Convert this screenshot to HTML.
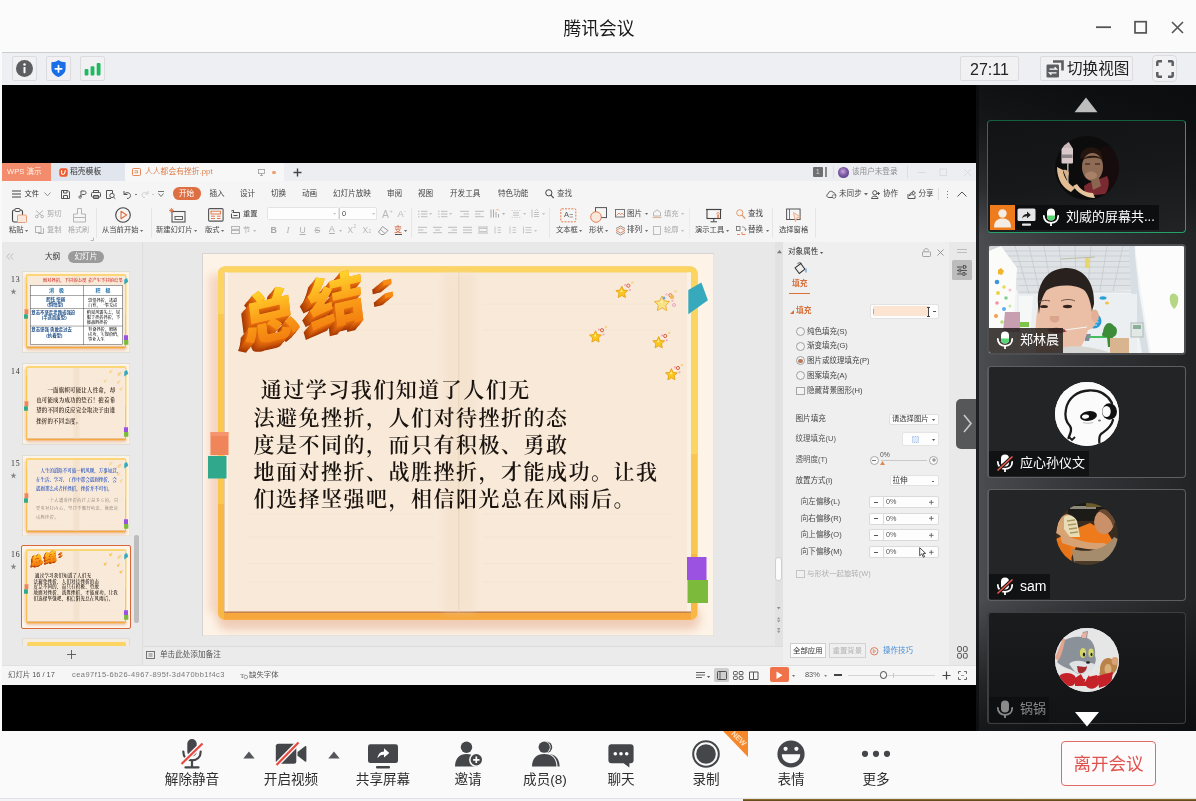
<!DOCTYPE html>
<html lang="zh-CN">
<head>
<meta charset="utf-8">
<title>腾讯会议</title>
<style>
*{box-sizing:border-box;margin:0;padding:0}
html,body{width:1196px;height:801px;overflow:hidden;background:#fafafa}
body{position:relative;font-family:"Liberation Sans","Noto Sans CJK SC",sans-serif;color:#222}
.abs{position:absolute}
#titlebar,#toolbar,#bottombar,#side{will-change:transform}
#titlebar{position:absolute;left:0;top:0;width:1196px;height:52px;background:#fbfbfb}
#title{position:absolute;left:1px;top:17px;width:1196px;text-align:center;font-size:17.7px;line-height:24px;color:#1a1a1a}
#toolbar{position:absolute;left:2px;top:52px;width:1194px;height:33px;background:#eeeff2;border-top:1px solid #cdcdd0}
.tbtn{position:absolute;top:3px;height:25px;border:1px solid #dcdce0;background:#f1f1f4;border-radius:2px}
#stage{position:absolute;left:2px;top:85px;width:974px;height:646px;background:#000}
#side{position:absolute;left:976px;top:85px;width:220px;height:646px;background:#1c1d1f}
#bottombar{position:absolute;left:0;top:731px;width:1196px;height:67px;background:#fafafa}
#strip{position:absolute;left:0;top:798px;width:1196px;height:3px;background:#f3f4f6;border-top:1px solid #dfe1e4}
#strip i{position:absolute;left:743px;top:-0.500px;width:453px;height:3.500px;background:linear-gradient(180deg,#a5822e 0%,#6b5220 35%,#54401a 100%)}
.bl{position:absolute;top:41px;font-size:13.6px;line-height:16px;color:#2e2e2e;white-space:nowrap;text-align:center}

#side{background:linear-gradient(90deg,#1e1f21 0px,#1f2022 2.6px,#4b4d51 3.2px,#47494d 12px,#333437 110px,#242527 212px,#222325 220px)}
#side:before{content:"";position:absolute;left:0;top:0;width:220px;height:150px;background:linear-gradient(180deg,rgba(8,9,10,.88) 0%,rgba(8,9,10,.8) 25%,rgba(8,9,10,.45) 70%,rgba(8,9,10,0) 100%);pointer-events:none}
#side:after{content:"";position:absolute;left:0;bottom:0;width:220px;height:130px;background:linear-gradient(0deg,rgba(8,9,10,.8) 0%,rgba(8,9,10,.6) 35%,rgba(8,9,10,0) 100%);pointer-events:none}
#side>*{z-index:1}
.tile{position:absolute;left:11px;width:199px;height:111px;border:1px solid #5e5f62;border-left:2px solid #5a5c60;border-radius:4px;background:linear-gradient(100deg,#1b1c1e 0%,#212224 45%,#2a2b2d 100%);overflow:hidden}
.nm{position:absolute;left:0px;bottom:1px;height:25px;background:#111213;color:#fff;font-size:13px;line-height:24px;white-space:nowrap;padding-left:31px}
.nm svg{position:absolute;left:7px;top:3px}
.av{position:absolute;left:66px;top:15px;width:64px;height:64px;border-radius:50%;overflow:hidden}
.av svg{filter:blur(.6px)}
#wpsclip{position:absolute;left:0;top:78px;width:974px;height:522px;overflow:hidden}
#wps{position:absolute;left:-2px;top:-163px;width:1196px;height:801px;filter:blur(.45px);font-family:"Liberation Sans","Noto Sans CJK SC",sans-serif}
#wps .a{position:absolute}
#wps .t{position:absolute;font-size:7.3px;line-height:10px;height:10px;white-space:nowrap;color:#3a3a3a}
#wps .g{color:#a9a9a9}
#wps .o{color:#d8703a}
#wps svg{overflow:visible}
#wps .ic{stroke:#555;stroke-width:1;fill:none}
#wps .ig{stroke:#b4b4b4;stroke-width:1;fill:none}

#wps .kai{font-family:"Liberation Serif","Noto Serif CJK SC",serif;font-weight:600}
</style>
</head>
<body>
<!-- ======= TITLE BAR ======= -->
<div id="titlebar">
  <div id="title">腾讯会议</div>
  <svg class="abs" style="left:1090px;top:15px" width="100" height="26" viewBox="0 0 100 26">
    <path d="M6 12.2H21" stroke="#555" stroke-width="1.8" fill="none"/>
    <rect x="45" y="6.7" width="11.2" height="11.2" stroke="#555" stroke-width="1.7" fill="none"/>
    <path d="M82 7L93 18M93 7L82 18" stroke="#555" stroke-width="1.6" fill="none"/>
  </svg>
</div>
<!-- ======= TOP TOOLBAR ======= -->
<div id="toolbar">
  <div class="tbtn" style="left:10px;width:25px"><svg class="abs" style="left:3px;top:3px" width="17" height="17" viewBox="0 0 17 17"><circle cx="8.5" cy="8.5" r="8.5" fill="#5d5e62"/><circle cx="8.5" cy="4.6" r="1.25" fill="#fff"/><rect x="7.5" y="7" width="2" height="6.2" rx=".6" fill="#fff"/></svg></div>
  <div class="tbtn" style="left:44px;width:25px"><svg class="abs" style="left:3px;top:2px" width="17" height="19" viewBox="0 0 17 19"><path d="M8.5 1C6.8 2.6 4.2 3.2 1.4 3.2V9.4C1.4 13.6 4.6 16.6 8.5 18C12.4 16.6 15.6 13.6 15.6 9.4V3.2C12.8 3.2 10.2 2.6 8.5 1Z" fill="#1a6fe8"/><path d="M8.5 6.6V13M5.3 9.8H11.7" stroke="#fff" stroke-width="1.7" stroke-linecap="round"/></svg></div>
  <div class="tbtn" style="left:78px;width:25px"><svg class="abs" style="left:2px;top:3px" width="19" height="17" viewBox="0 0 19 17"><rect x="1.6" y="9" width="3.8" height="6.6" rx="1" fill="#1dba5f"/><rect x="7.6" y="6.3" width="3.8" height="9.3" rx="1" fill="#1dba5f"/><rect x="13.7" y="3" width="3.8" height="12.6" rx="1" fill="#1dba5f"/></svg></div>
  <div class="tbtn" style="left:958px;width:59px;font-size:16px;line-height:25px;text-align:center;color:#222">27:11</div>
  <div class="tbtn" style="left:1038px;width:93px"><svg class="abs" style="left:5px;top:3px" width="18" height="18" viewBox="0 0 18 18"><path d="M7 1.500H16.500V10.500" stroke="#5d5e62" stroke-width="2.600" fill="none"/><rect x="0.500" y="4.500" width="12.500" height="13" rx="1.200" fill="#5d5e62"/><path d="M3.5 9.2H10.5L8.6 7.3M10.5 12.8H3.5L5.4 14.7" stroke="#fff" stroke-width="1.3" fill="none"/></svg><span class="abs" style="left:26px;top:1px;font-size:15.6px;line-height:22px;color:#222;white-space:nowrap">切换视图</span></div>
  <div class="tbtn" style="left:1150px;top:2px;width:25px;height:27px;border-radius:4px"><svg class="abs" style="left:3px;top:4px" width="18" height="18" viewBox="0 0 18 18"><path d="M1.300 6V2.300A1 1 0 0 1 2.300 1.300H6M12 1.300H15.700A1 1 0 0 1 16.700 2.300V6M16.700 12V15.700A1 1 0 0 1 15.700 16.700H12M6 16.700H2.300A1 1 0 0 1 1.300 15.700V12" stroke="#5d5e62" stroke-width="2.500" fill="none"/></svg></div>
</div>
<!-- ======= STAGE ======= -->
<div id="stage"><div id="wpsclip"><div id="wps">
<div class="a" style="left:2px;top:163px;width:974px;height:522px;background:#f5f5f5"></div>
<div class="a" style="left:2px;top:163px;width:974px;height:18px;background:#eceef2"></div>
<div class="a" style="left:2px;top:163px;width:49px;height:18px;background:#f28c6c"></div>
<div class="t" style="left:7px;top:167.3px;color:#fff3ea;font-size:7.6px">WPS 演示</div>
<div class="a" style="left:51px;top:163px;width:74px;height:18px;background:#e0e5ee"></div>
<svg class="a" style="left:59px;top:167.5px;" width="9" height="9" viewBox="0 0 9 9"><rect x="0.3" y="0.3" width="8.4" height="8.4" rx="2.2" fill="#ef5b2c"/><path d="M2.6 2.2V5.2C2.600 6.800 5.500 6.800 5.800 4.600L6.400 2.200" stroke="#fff" stroke-width="1.100" fill="none"/></svg>
<div class="t" style="left:70px;top:167.3px;color:#333;font-size:7.8px">稻壳模板</div>
<div class="a" style="left:125px;top:163px;width:158.5px;height:18px;background:#f7f7f7"></div>
<svg class="a" style="left:132px;top:168px;" width="9" height="8" viewBox="0 0 9 8"><rect x="0.5" y="0.5" width="8" height="7" rx="0.800" stroke="#e58a5c" fill="none" stroke-width="1"/><path d="M2.500 2.800H5.500V4.800H2.500" stroke="#e58a5c" fill="none" stroke-width="0.900"/></svg>
<div class="t" style="left:145px;top:167.3px;color:#e0824f;font-size:7.8px">人人都会有挫折.ppt</div>
<svg class="a" style="left:258px;top:168.5px;" width="7" height="7" viewBox="0 0 7 7"><rect x="0.500" y="0.500" width="6" height="4" stroke="#999" fill="none" stroke-width="0.800"/><path d="M3.500 4.500V6.500M2 6.500H5" stroke="#999" stroke-width="0.800"/></svg>
<div class="a" style="left:272.3px;top:170.5px;width:3.4px;height:3.4px;background:#f0a065;border-radius:50%"></div>
<svg class="a" style="left:293px;top:168px;" width="9" height="9" viewBox="0 0 9 9"><path d="M4.500 0.500V8.500M0.500 4.500H8.500" stroke="#444" stroke-width="1.400"/></svg>
<div class="a" style="left:813px;top:167px;width:10px;height:10px;background:#6f6f72;border-radius:1px"></div>
<div class="t" style="left:816px;top:167px;color:#ddd;font-size:6.5px">1</div>
<div class="a" style="left:825px;top:167px;width:1.6px;height:10px;background:#8a8a8d"></div>
<div class="a" style="left:833px;top:166px;width:1px;height:12px;background:#dcdde0"></div>
<div class="a" style="left:838px;top:167px;width:10.5px;height:10.5px;background:radial-gradient(circle at 45% 40%,#c9a6d8 0%,#7d5aa6 45%,#4a3572 100%);border-radius:50%"></div>
<div class="t" style="left:852px;top:167.3px;color:#8d8d90;font-size:7.6px">该用户未登录</div>
<div class="a" style="left:907px;top:166px;width:1px;height:12px;background:#dcdde0"></div>
<svg class="a" style="left:918px;top:168px;" width="55" height="9" viewBox="0 0 55 9"><path d="M0 4.500H8" stroke="#dadbde" stroke-width="1"/><rect x="22" y="1" width="6.500" height="6.500" stroke="#dadbde" fill="none"/><path d="M46 1L53 8M53 1L46 8" stroke="#dadbde" stroke-width="1"/></svg>
<svg class="a" style="left:12px;top:190px;" width="9" height="8" viewBox="0 0 9 8"><path d="M0 1H9M0 4H9M0 7H9" stroke="#444" stroke-width="1"/></svg>
<div class="t" style="left:24.5px;top:188.6px;color:#333">文件</div>
<svg class="a" style="left:44px;top:191.5px;" width="7" height="5" viewBox="0 0 7 5"><path d="M0.500 0.500L3.500 3.800L6.500 0.500" stroke="#888" fill="none" stroke-width="0.900"/></svg>
<svg class="a" style="left:61px;top:189.5px;" width="9" height="9" viewBox="0 0 9 9"><path d="M0.500 0.500H7L8.500 2V8.500H0.500Z" class="ic"/><path d="M2.500 0.500V3H6V0.500M2.500 8.500V5.500H6.500V8.500" class="ic" stroke-width="0.800"/></svg>
<svg class="a" style="left:78px;top:189.5px;" width="9" height="9" viewBox="0 0 9 9"><path d="M2.500 8.500C1 8.500 0.500 7 1.500 6C2.500 5 3.500 6 3 7.500M3 7.500V1H6.500C8.500 1 8.500 4.500 6.500 4.500H4" class="ic"/></svg>
<svg class="a" style="left:91px;top:189.5px;" width="10" height="9" viewBox="0 0 10 9"><rect x="0.500" y="2.500" width="9" height="4.500" rx="1" class="ic"/><path d="M2.500 2.500V0.500H7.500V2.500M2.500 5.500H7.500V8.500H2.500Z" class="ic" stroke-width="0.900"/></svg>
<svg class="a" style="left:106px;top:189.5px;" width="10" height="9" viewBox="0 0 10 9"><path d="M5 8.500H0.500V0.500H6.500V3" class="ic"/><circle cx="6" cy="5.500" r="2.200" class="ic"/><path d="M7.600 7.200L9.300 8.800" class="ic"/></svg>
<svg class="a" style="left:122px;top:189.5px;" width="10" height="9" viewBox="0 0 10 9"><path d="M2 1V4.500H5.500" class="ic" stroke-width="1.100"/><path d="M2 4.500C4 1.500 8.500 2.500 8.500 5.500C8.500 7.500 7 8.500 5 8.500" class="ic" stroke-width="1.100"/></svg>
<div class="a" style="left:134.5px;top:193.5px;width:2.5px;height:1px;background:#777"></div>
<svg class="a" style="left:141px;top:190px;" width="9" height="8" viewBox="0 0 9 8"><path d="M7 1V4H4" stroke="#d2d2d2" fill="none"/><path d="M7 4C5.500 1.500 1 2 1 5C1 6.800 2.500 7.500 4 7.500" stroke="#d2d2d2" fill="none"/></svg>
<div class="a" style="left:151.5px;top:193.5px;width:2px;height:1px;background:#ccc"></div>
<svg class="a" style="left:158px;top:190.5px;" width="6" height="6" viewBox="0 0 6 6"><path d="M0 0.500H6" stroke="#666" stroke-width="0.900"/><path d="M0.500 2.500L3 5.500L5.500 2.500" stroke="#666" fill="none" stroke-width="0.900"/></svg>
<div class="a" style="left:173px;top:187.3px;width:27.5px;height:12.6px;background:#dd6f42;border-radius:6.300px"></div>
<div class="t" style="left:179px;top:188.6px;color:#fff;font-size:7.6px">开始</div>
<div class="t" style="left:209.5px;top:188.6px;color:#444;font-size:7.6px">插入</div>
<div class="t" style="left:240px;top:188.6px;color:#444;font-size:7.6px">设计</div>
<div class="t" style="left:271px;top:188.6px;color:#444;font-size:7.6px">切换</div>
<div class="t" style="left:302px;top:188.6px;color:#444;font-size:7.6px">动画</div>
<div class="t" style="left:333px;top:188.6px;color:#444;font-size:7.6px">幻灯片放映</div>
<div class="t" style="left:387px;top:188.6px;color:#444;font-size:7.6px">审阅</div>
<div class="t" style="left:418px;top:188.6px;color:#444;font-size:7.6px">视图</div>
<div class="t" style="left:450px;top:188.6px;color:#444;font-size:7.6px">开发工具</div>
<div class="t" style="left:498px;top:188.6px;color:#444;font-size:7.6px">特色功能</div>
<svg class="a" style="left:545px;top:189px;" width="9" height="10" viewBox="0 0 9 10"><circle cx="3.800" cy="3.800" r="3.100" stroke="#444" fill="none" stroke-width="1"/><path d="M6 6.200L8.700 9.200" stroke="#444" stroke-width="1.100"/></svg>
<div class="t" style="left:557px;top:188.6px;color:#555;font-size:7.6px">查找</div>
<svg class="a" style="left:826px;top:189.5px;" width="11" height="8" viewBox="0 0 11 8"><path d="M3 7.500C0.500 7.500 0 4.500 2.200 3.800C2.500 1 6.500 0.200 7.600 3C10 2.800 10.800 7.500 8 7.500Z" class="ic" stroke-width="0.900"/><circle cx="8" cy="6.500" r="1.800" fill="#f5f5f5" stroke="#555" stroke-width="0.700"/></svg>
<div class="t" style="left:839px;top:188.6px;color:#444;font-size:7.6px">未同步</div>
<svg class="a" style="left:863.5px;top:193px;" width="4" height="3" viewBox="0 0 4 3"><path d="M0 0H4L2 2.500Z" fill="#666"/></svg>
<svg class="a" style="left:870.5px;top:189.5px;" width="9" height="9" viewBox="0 0 9 9"><circle cx="3.800" cy="2.800" r="2.100" class="ic" stroke-width="0.900"/><path d="M0.500 8.500C0.500 5.500 7 5.500 7 8.500Z" class="ic" stroke-width="0.900"/><path d="M7.500 2V5M6 3.500H9" class="ic" stroke-width="0.800"/></svg>
<div class="t" style="left:883px;top:188.6px;color:#444;font-size:7.600px">协作</div>
<svg class="a" style="left:906px;top:189.5px;" width="10" height="9" viewBox="0 0 10 9"><path d="M2 4V8.500H9V5.500" class="ic" stroke-width="0.900"/><path d="M3.500 6C3.500 3.500 5 2.200 7 2.200V0.800L9.500 3L7 5.200V3.800C5.500 3.800 4.500 4.500 3.500 6Z" class="ic" stroke-width="0.800"/></svg>
<div class="t" style="left:918.5px;top:188.6px;color:#444;font-size:7.600px">分享</div>
<div class="a" style="left:938px;top:187.5px;width:1px;height:12px;background:#dedede"></div>
<div class="a" style="left:946.6px;top:190.5px;width:1.4px;height:1.4px;background:#555;border-radius:50%"></div>
<div class="a" style="left:946.6px;top:193.5px;width:1.4px;height:1.4px;background:#555;border-radius:50%"></div>
<div class="a" style="left:946.6px;top:196.5px;width:1.4px;height:1.4px;background:#555;border-radius:50%"></div>
<svg class="a" style="left:957px;top:191px;" width="10" height="6" viewBox="0 0 10 6"><path d="M0.500 5.500L5 1L9.500 5.500" stroke="#555" fill="none" stroke-width="1"/></svg>
<div class="a" style="left:2px;top:205px;width:974px;height:37px;background:#f5f5f5"></div>
<div class="a" style="left:2px;top:241.5px;width:974px;height:1px;background:#dcdcdc"></div>
<svg class="a" style="left:12px;top:207.5px;" width="15" height="15" viewBox="0 0 15 15"><rect x="0.500" y="2" width="10" height="12" rx="1.800" stroke="#444" fill="none" stroke-width="1.100"/><rect x="3" y="0.500" width="5" height="3" rx="0.800" fill="#f5f5f5" stroke="#444" stroke-width="0.900"/><rect x="5.500" y="7" width="9" height="7.500" rx="1" fill="#fbe6da" stroke="#e59a75" stroke-width="0.900"/></svg>
<div class="t" style="left:9px;top:225px;color:#444">粘贴</div>
<svg class="a" style="left:24.5px;top:229.7px;" width="3.2" height="2.2" viewBox="0 0 3.2 2.2"><path d="M0 0H3.200L1.600 2Z" fill="#707070"/></svg>
<svg class="a" style="left:35px;top:209.5px;" width="9" height="8" viewBox="0 0 9 8"><path d="M1 0.500L7 6M8 0.500L2 6" class="ig"/><circle cx="1.800" cy="6.500" r="1.300" class="ig"/><circle cx="7.200" cy="6.500" r="1.300" class="ig"/></svg>
<div class="t g" style="left:47px;top:208.5px;">剪切</div>
<svg class="a" style="left:35px;top:226px;" width="9" height="8" viewBox="0 0 9 8"><rect x="0.500" y="0.500" width="5.500" height="6" class="ig"/><path d="M3 7.500H8.500V2" class="ig"/></svg>
<div class="t g" style="left:47px;top:225px;">复制</div>
<svg class="a" style="left:72px;top:207.5px;" width="15" height="15" viewBox="0 0 15 15"><path d="M5.500 0.500H9.500V6H13.500V9.500H1.500V6H5.500Z" class="ig" stroke-width="1.100"/><path d="M1.500 9.500V14H13.500V9.500" class="ig" stroke-width="1.100"/></svg>
<div class="t g" style="left:68px;top:225px;font-size:7px;">格式刷</div>
<svg class="a" style="left:90px;top:237px;" width="4" height="4" viewBox="0 0 4 4"><path d="M3.500 0.500V3.500H0.500" stroke="#aaa" fill="none" stroke-width="0.800"/></svg>
<div class="a" style="left:95.5px;top:208px;width:1px;height:30px;background:#e6e6e6"></div>
<svg class="a" style="left:114.5px;top:207px;" width="16" height="16" viewBox="0 0 16 16"><circle cx="8" cy="8" r="7.300" stroke="#444" fill="none" stroke-width="1.100"/><path d="M6 4.200L11.600 8L6 11.800Z" stroke="#e0703f" fill="none" stroke-width="1.100" stroke-linejoin="round"/></svg>
<div class="t" style="left:102px;top:225px;color:#444">从当前开始</div>
<svg class="a" style="left:140px;top:229.7px;" width="3.2" height="2.2" viewBox="0 0 3.2 2.2"><path d="M0 0H3.200L1.600 2Z" fill="#707070"/></svg>
<div class="a" style="left:150.5px;top:208px;width:1px;height:30px;background:#e6e6e6"></div>
<svg class="a" style="left:169px;top:207.5px;" width="17" height="15" viewBox="0 0 17 15"><rect x="3" y="3.500" width="13" height="10.500" stroke="#555" fill="none" stroke-width="1.100"/><rect x="6" y="8.500" width="7.500" height="3" stroke="#555" fill="none" stroke-width="0.900"/><path d="M2.500 0V5M0 2.500H5M0.700 0.700L4.300 4.300M4.300 0.700L0.700 4.300" stroke="#e0703f" stroke-width="0.800"/></svg>
<div class="t" style="left:156px;top:225px;color:#444">新建幻灯片</div>
<svg class="a" style="left:194px;top:229.7px;" width="3.2" height="2.2" viewBox="0 0 3.2 2.2"><path d="M0 0H3.200L1.600 2Z" fill="#707070"/></svg>
<svg class="a" style="left:208px;top:208px;" width="16" height="14" viewBox="0 0 16 14"><rect x="0.600" y="0.600" width="14.500" height="12.500" rx="1" stroke="#555" fill="none" stroke-width="1.100"/><rect x="3" y="3.200" width="9.500" height="2.800" stroke="#e0703f" fill="none" stroke-width="0.900"/><path d="M3 8.200H7M3 10.500H7M9 8.200H12.500M9 10.500H12.500" stroke="#e0703f" stroke-width="0.900"/></svg>
<div class="t" style="left:205px;top:225px;color:#444">版式</div>
<svg class="a" style="left:220.5px;top:229.7px;" width="3.2" height="2.2" viewBox="0 0 3.2 2.2"><path d="M0 0H3.200L1.600 2Z" fill="#707070"/></svg>
<svg class="a" style="left:231px;top:209.5px;" width="9" height="8.5" viewBox="0 0 9 8.5"><path d="M1.500 2.500H8.500V8H0.500V3.500" class="ic" stroke-width="0.900"/><path d="M0.300 1L2.500 0.300V2.500" class="ic" stroke-width="0.800"/><path d="M2.500 5.500H6.500" class="ic" stroke-width="0.800"/></svg>
<div class="t" style="left:243px;top:208.5px;color:#444">重置</div>
<svg class="a" style="left:231px;top:226px;" width="9" height="8" viewBox="0 0 9 8"><rect x="0.500" y="0.500" width="8" height="2.800" class="ig"/><rect x="0.500" y="4.500" width="8" height="3" class="ig"/></svg>
<div class="t g" style="left:243px;top:225px;">节</div>
<svg class="a" style="left:252.5px;top:229.7px;" width="3.2" height="2.2" viewBox="0 0 3.2 2.2"><path d="M0 0H3.200L1.600 2Z" fill="#b8b8b8"/></svg>
<div class="a" style="left:266.5px;top:207px;width:72.5px;height:13px;background:#fdfdfd;border:1px solid #e4e4e4;border-radius:1.500px"></div>
<svg class="a" style="left:333px;top:213.39999999999998px;" width="3.2" height="2.2" viewBox="0 0 3.2 2.2"><path d="M0 0H3.200L1.600 2Z" fill="#c8c8c8"/></svg>
<div class="a" style="left:339px;top:207px;width:38px;height:13px;background:#fdfdfd;border:1px solid #e4e4e4;border-left-color:#cfcfcf;border-radius:1.500px"></div>
<div class="t" style="left:342px;top:208.5px;color:#444">0</div>
<svg class="a" style="left:371.5px;top:213.39999999999998px;" width="3.2" height="2.2" viewBox="0 0 3.2 2.2"><path d="M0 0H3.200L1.600 2Z" fill="#c8c8c8"/></svg>
<div class="t" style="left:382px;top:208.5px;color:#b9b9b9;font-size:10.500px">A</div>
<div class="t" style="left:389.5px;top:205.5px;color:#b9b9b9;font-size:5.500px">+</div>
<div class="t" style="left:397.5px;top:209.0px;color:#b9b9b9;font-size:9.500px">A</div>
<div class="t" style="left:404px;top:205.5px;color:#b9b9b9;font-size:5.500px">-</div>
<div class="t" style="left:270.5px;top:224.5px;color:#a6a6a6;font-size:8.800px;font-weight:700">B</div>
<div class="t" style="left:286.5px;top:224.5px;color:#b0b0b0;font-size:8.800px;font-style:italic;font-family:Liberation Serif,serif">I</div>
<div class="t" style="left:299.5px;top:224.5px;color:#b0b0b0;font-size:8.600px;text-decoration:underline">U</div>
<div class="t" style="left:314.5px;top:224.5px;color:#b0b0b0;font-size:8.600px;text-decoration:line-through">S</div>
<div class="t" style="left:329px;top:224.2px;color:#b0b0b0;font-size:8.600px;text-decoration:underline">A</div>
<svg class="a" style="left:338.5px;top:229.7px;" width="3.2" height="2.2" viewBox="0 0 3.2 2.2"><path d="M0 0H3.200L1.600 2Z" fill="#bdbdbd"/></svg>
<div class="t" style="left:347.5px;top:224.7px;color:#b8b8b8;font-size:8.400px">X</div>
<div class="t" style="left:353.5px;top:221.5px;color:#b8b8b8;font-size:4.500px">2</div>
<div class="t" style="left:362.5px;top:224.7px;color:#b8b8b8;font-size:8.400px">X</div>
<div class="t" style="left:368.5px;top:227px;color:#b8b8b8;font-size:4.500px">2</div>
<svg class="a" style="left:378px;top:225.5px;" width="11" height="9" viewBox="0 0 11 9"><path d="M4.500 0.500L10 4.500L6 8.500H3L0.500 6Z" stroke="#8f8f8f" fill="none" stroke-width="0.900"/><path d="M2.500 3.500L7 7.500" stroke="#8f8f8f" stroke-width="0.800"/></svg>
<div class="t" style="left:394px;top:225px;color:#d0603a;font-size:8px">变</div>
<div class="a" style="left:394.5px;top:234.3px;width:7px;height:1px;background:#555"></div>
<svg class="a" style="left:404px;top:229.7px;" width="3.2" height="2.2" viewBox="0 0 3.2 2.2"><path d="M0 0H3.200L1.600 2Z" fill="#707070"/></svg>
<div class="a" style="left:410.5px;top:208px;width:1px;height:30px;background:#e6e6e6"></div>
<svg class="a" style="left:418px;top:209.5px;" width="10" height="8" viewBox="0 0 10 8"><rect x="0.300" y="0.8" width="1.100" height="1.100" fill="#adadad"/><path d="M3 1.3H9.500" stroke="#adadad" stroke-width="0.800"/><rect x="0.300" y="3.5" width="1.100" height="1.100" fill="#adadad"/><path d="M3 4H9.500" stroke="#adadad" stroke-width="0.800"/><rect x="0.300" y="6.2" width="1.100" height="1.100" fill="#adadad"/><path d="M3 6.7H9.500" stroke="#adadad" stroke-width="0.800"/></svg>
<svg class="a" style="left:429px;top:213.2px;" width="3.2" height="2.2" viewBox="0 0 3.2 2.2"><path d="M0 0H3.200L1.600 2Z" fill="#c4c4c4"/></svg>
<svg class="a" style="left:438px;top:209.5px;" width="10" height="8" viewBox="0 0 10 8"><rect x="0.300" y="0.8" width="1.100" height="1.100" fill="#adadad"/><path d="M3 1.3H9.500" stroke="#adadad" stroke-width="0.800"/><rect x="0.300" y="3.5" width="1.100" height="1.100" fill="#adadad"/><path d="M3 4H9.500" stroke="#adadad" stroke-width="0.800"/><rect x="0.300" y="6.2" width="1.100" height="1.100" fill="#adadad"/><path d="M3 6.7H9.500" stroke="#adadad" stroke-width="0.800"/></svg>
<svg class="a" style="left:449px;top:213.2px;" width="3.2" height="2.2" viewBox="0 0 3.2 2.2"><path d="M0 0H3.200L1.600 2Z" fill="#c4c4c4"/></svg>
<svg class="a" style="left:460px;top:209.5px;" width="9" height="8" viewBox="0 0 9 8"><path d="M0.0 1.2999999999999998H9.0" stroke="#adadad" stroke-width="0.800"/><path d="M3.6 4H9.0" stroke="#adadad" stroke-width="0.800"/><path d="M0.0 6.7H9.0" stroke="#adadad" stroke-width="0.800"/></svg>
<svg class="a" style="left:474.5px;top:209.5px;" width="9" height="8" viewBox="0 0 9 8"><path d="M0.0 1.2999999999999998H9.0" stroke="#adadad" stroke-width="0.800"/><path d="M0.0 4H5.4" stroke="#adadad" stroke-width="0.800"/><path d="M0.0 6.7H9.0" stroke="#adadad" stroke-width="0.800"/></svg>
<svg class="a" style="left:490px;top:209px;" width="10" height="9" viewBox="0 0 10 9"><path d="M1 0.500V8.500M3.500 0.500V8.500M6 3V8.500M8.500 5V8.500" stroke="#a0a0a0" stroke-width="0.900"/><path d="M6 1.500L7.500 0L9 1.500" stroke="#e9a07a" fill="none" stroke-width="0.800"/></svg>
<svg class="a" style="left:501.5px;top:213.2px;" width="3.2" height="2.2" viewBox="0 0 3.2 2.2"><path d="M0 0H3.200L1.600 2Z" fill="#b0b0b0"/></svg>
<svg class="a" style="left:511px;top:209.5px;" width="10" height="8" viewBox="0 0 10 8"><path d="M0.500 0.500H9.500M0.500 7.500H9.500" stroke="#c8c8c8" stroke-width="0.700" stroke-dasharray="1.500 1"/><path d="M2 2.800H8M2 5.200H8" stroke="#b4b4b4" stroke-width="0.800"/></svg>
<svg class="a" style="left:522.5px;top:213.2px;" width="3.2" height="2.2" viewBox="0 0 3.2 2.2"><path d="M0 0H3.200L1.600 2Z" fill="#c4c4c4"/></svg>
<svg class="a" style="left:531px;top:209px;" width="9" height="9" viewBox="0 0 9 9"><path d="M1 0.500V8.500" stroke="#b4b4b4" stroke-width="0.800"/><path d="M3 3.500H8M3 5.500H8M3 7.500H8" stroke="#b4b4b4" stroke-width="0.800"/><path d="M4 2L5.500 0.500L7 2" stroke="#b4b4b4" fill="none" stroke-width="0.700"/></svg>
<svg class="a" style="left:542px;top:213.2px;" width="3.2" height="2.2" viewBox="0 0 3.2 2.2"><path d="M0 0H3.200L1.600 2Z" fill="#c4c4c4"/></svg>
<svg class="a" style="left:418px;top:226px;" width="9" height="8" viewBox="0 0 9 8"><path d="M0.0 1.2999999999999998H9.0" stroke="#adadad" stroke-width="0.800"/><path d="M0.0 4H5.4" stroke="#adadad" stroke-width="0.800"/><path d="M0.0 6.7H9.0" stroke="#adadad" stroke-width="0.800"/></svg>
<svg class="a" style="left:433px;top:226px;" width="9" height="8" viewBox="0 0 9 8"><path d="M0.0 1.2999999999999998H9.0" stroke="#adadad" stroke-width="0.800"/><path d="M2.2 4H6.8" stroke="#adadad" stroke-width="0.800"/><path d="M0.0 6.7H9.0" stroke="#adadad" stroke-width="0.800"/></svg>
<svg class="a" style="left:448px;top:226px;" width="9" height="8" viewBox="0 0 9 8"><path d="M0.0 1.2999999999999998H9.0" stroke="#adadad" stroke-width="0.800"/><path d="M3.6 4H9.0" stroke="#adadad" stroke-width="0.800"/><path d="M0.0 6.7H9.0" stroke="#adadad" stroke-width="0.800"/></svg>
<svg class="a" style="left:463px;top:226px;" width="9" height="8" viewBox="0 0 9 8"><path d="M0.0 1.2999999999999998H9.0" stroke="#adadad" stroke-width="0.800"/><path d="M0.0 4H9.0" stroke="#adadad" stroke-width="0.800"/><path d="M0.0 6.7H9.0" stroke="#adadad" stroke-width="0.800"/></svg>
<svg class="a" style="left:478px;top:226px;" width="10" height="8" viewBox="0 0 10 8"><path d="M0 1H10M0 7H10" stroke="#b4b4b4" stroke-width="0.900"/><rect x="1" y="2.500" width="8" height="3" stroke="#b4b4b4" fill="none" stroke-width="0.700"/></svg>
<svg class="a" style="left:494px;top:226px;" width="7" height="8" viewBox="0 0 7 8"><path d="M1 0.500V7.500M3.500 1.500H7M3.500 4H7M3.500 6.500H7" stroke="#bbb" stroke-width="0.800"/></svg>
<svg class="a" style="left:509px;top:226px;" width="7" height="8" viewBox="0 0 7 8"><path d="M1 0.500V7.500M3.500 1.500H7M3.500 4H7M3.500 6.500H7" stroke="#bbb" stroke-width="0.800"/></svg>
<svg class="a" style="left:523px;top:226px;" width="9" height="8" viewBox="0 0 9 8"><path d="M0.500 0.500V7.500M2.500 1.500H8.500M2.500 4H8.500M2.500 6.500H8.500" stroke="#bbb" stroke-width="0.800"/></svg>
<svg class="a" style="left:534px;top:229.7px;" width="3.2" height="2.2" viewBox="0 0 3.2 2.2"><path d="M0 0H3.200L1.600 2Z" fill="#c8c8c8"/></svg>
<div class="a" style="left:548.5px;top:208px;width:1px;height:30px;background:#e6e6e6"></div>
<svg class="a" style="left:560px;top:207.5px;" width="17" height="15" viewBox="0 0 17 15"><rect x="0.800" y="0.800" width="15" height="13" rx="1" stroke="#e0703f" fill="none" stroke-width="0.900" stroke-dasharray="2 1.200"/><text x="4" y="9" font-size="7.500" fill="#555" font-family="Liberation Sans,sans-serif">A</text><path d="M9.500 6.500H13M9.500 9H13" stroke="#777" stroke-width="0.700"/></svg>
<div class="t" style="left:556px;top:225px;color:#444">文本框</div>
<svg class="a" style="left:579px;top:229.7px;" width="3.2" height="2.2" viewBox="0 0 3.2 2.2"><path d="M0 0H3.200L1.600 2Z" fill="#707070"/></svg>
<svg class="a" style="left:590px;top:207px;" width="18" height="16" viewBox="0 0 18 16"><rect x="5.500" y="0.600" width="11" height="10" stroke="#555" fill="#f5f5f5" stroke-width="1"/><circle cx="6" cy="10" r="5.300" stroke="#e0703f" fill="#fbe8dd" stroke-width="0.900"/></svg>
<div class="t" style="left:589px;top:225px;color:#444">形状</div>
<svg class="a" style="left:605px;top:229.7px;" width="3.2" height="2.2" viewBox="0 0 3.2 2.2"><path d="M0 0H3.200L1.600 2Z" fill="#707070"/></svg>
<svg class="a" style="left:615px;top:209px;" width="10" height="9" viewBox="0 0 10 9"><rect x="0.500" y="0.500" width="9" height="7.500" stroke="#666" fill="none" stroke-width="0.900"/><path d="M1.500 6.500L4 4L5.500 5.500L7 4.200L8.800 6" stroke="#e0703f" fill="none" stroke-width="0.800"/></svg>
<div class="t" style="left:627px;top:208.5px;color:#444;font-size:7.600px">图片</div>
<svg class="a" style="left:644.5px;top:213.2px;" width="3.2" height="2.2" viewBox="0 0 3.2 2.2"><path d="M0 0H3.200L1.600 2Z" fill="#707070"/></svg>
<svg class="a" style="left:614.5px;top:225.5px;" width="11" height="9" viewBox="0 0 11 9"><path d="M1 4.500L5.500 2L10 4.500L5.500 7Z" stroke="#e0703f" fill="none" stroke-width="0.800"/><path d="M1 6.500L5.500 9L10 6.500M1 2.500L5.500 0L10 2.500" stroke="#777" fill="none" stroke-width="0.800"/></svg>
<div class="t" style="left:627px;top:225px;color:#444;font-size:7.600px">排列</div>
<svg class="a" style="left:644.5px;top:229.7px;" width="3.2" height="2.2" viewBox="0 0 3.2 2.2"><path d="M0 0H3.200L1.600 2Z" fill="#707070"/></svg>
<svg class="a" style="left:652px;top:209px;" width="10" height="9" viewBox="0 0 10 9"><path d="M1.500 3.500L5 0.800L8.500 3.500V7H1.500Z" stroke="#b0b0b0" fill="none" stroke-width="0.900"/><path d="M0.500 8.500H9.500" stroke="#e5b49a" stroke-width="1.200"/></svg>
<div class="t g" style="left:664px;top:208.5px;">填充</div>
<svg class="a" style="left:681px;top:213.2px;" width="3.2" height="2.2" viewBox="0 0 3.2 2.2"><path d="M0 0H3.200L1.600 2Z" fill="#c0c0c0"/></svg>
<svg class="a" style="left:652.5px;top:225.5px;" width="9" height="9" viewBox="0 0 9 9"><rect x="0.500" y="0.500" width="7" height="8" stroke="#b8b8b8" fill="none" stroke-width="0.900"/></svg>
<div class="t g" style="left:664px;top:225px;">轮廓</div>
<svg class="a" style="left:681px;top:229.7px;" width="3.2" height="2.2" viewBox="0 0 3.2 2.2"><path d="M0 0H3.200L1.600 2Z" fill="#c0c0c0"/></svg>
<div class="a" style="left:688.5px;top:208px;width:1px;height:30px;background:#ececec"></div>
<svg class="a" style="left:705.5px;top:207.5px;" width="16" height="15" viewBox="0 0 16 15"><rect x="1" y="1.500" width="13.500" height="9" stroke="#444" fill="none" stroke-width="1.100"/><path d="M0 1.500H15.500" stroke="#444" stroke-width="1.100"/><path d="M7.800 10.500V13.500M4.500 13.800H11" stroke="#444" stroke-width="1"/><path d="M12 4.500C13.500 4.500 13.500 6.500 12.500 6.800V10H11.500V6.800C10.500 6.500 10.500 4.500 12 4.500Z" fill="#f5f5f5" stroke="#e0703f" stroke-width="0.700"/></svg>
<div class="t" style="left:695px;top:225px;color:#444">演示工具</div>
<svg class="a" style="left:725.5px;top:229.7px;" width="3.2" height="2.2" viewBox="0 0 3.2 2.2"><path d="M0 0H3.200L1.600 2Z" fill="#707070"/></svg>
<svg class="a" style="left:736px;top:208.5px;" width="10" height="10" viewBox="0 0 10 10"><circle cx="3.800" cy="3.800" r="3.100" stroke="#e0905f" fill="none" stroke-width="0.900"/><path d="M6 6.200L9.200 9.500" stroke="#e0905f" stroke-width="1.100"/></svg>
<div class="t" style="left:748px;top:208.5px;color:#444;font-size:7.600px">查找</div>
<svg class="a" style="left:735.5px;top:225.5px;" width="11" height="9" viewBox="0 0 11 9"><rect x="0.500" y="0.500" width="3.500" height="4" stroke="#666" fill="none" stroke-width="0.800"/><path d="M6 1C8.500 0.500 9.800 2 9.500 4.500L8.500 3.500M9.500 4.500L10.500 3.500" stroke="#666" fill="none" stroke-width="0.700"/><path d="M1 8.500H4M6 8.500H9.500M6 6V8.500" stroke="#e0703f" stroke-width="0.800"/></svg>
<div class="t" style="left:748px;top:225px;color:#444;font-size:7.600px">替换</div>
<svg class="a" style="left:765.5px;top:229.7px;" width="3.2" height="2.2" viewBox="0 0 3.2 2.2"><path d="M0 0H3.200L1.600 2Z" fill="#707070"/></svg>
<div class="a" style="left:771.5px;top:208px;width:1px;height:30px;background:#e6e6e6"></div>
<svg class="a" style="left:786px;top:207.5px;" width="16" height="15" viewBox="0 0 16 15"><rect x="0.600" y="1" width="13.500" height="10.500" stroke="#555" fill="none" stroke-width="1"/><path d="M3.500 1V11.500" stroke="#555" stroke-width="0.800"/><path d="M7.500 4.500L14.500 9L11 9.800L9.500 13.500Z" stroke="#e59a75" fill="#fbe8dd" stroke-width="0.800" stroke-linejoin="round"/></svg>
<div class="t" style="left:779px;top:225px;color:#444">选择窗格</div>
<div class="a" style="left:814.5px;top:208px;width:1px;height:30px;background:#e6e6e6"></div>
<div class="a" style="left:2px;top:242px;width:139.5px;height:423px;background:#e9e9e9"></div>
<div class="a" style="left:141.5px;top:242px;width:1px;height:423px;background:#dedede"></div>
<div class="a" style="left:142.5px;top:242px;width:633px;height:404px;background:#e8e8e8"></div>
<div class="a" style="left:142.5px;top:646px;width:640.5px;height:19px;background:#ebebeb;border-top:1px solid #dcdcdc"></div>
<div class="a" style="left:775px;top:242px;width:8px;height:404px;background:#e2e2e2"></div>
<div class="a" style="left:783px;top:242px;width:165.5px;height:423px;background:#efefef"></div>
<div class="a" style="left:948.5px;top:242px;width:27.5px;height:423px;background:#e9e9e9"></div>
<div class="a" style="left:2px;top:665px;width:974px;height:20px;background:#f6f6f6;border-top:1px solid #e0e0e0"></div>
<svg class="a" style="left:6px;top:253px;" width="8" height="7" viewBox="0 0 8 7"><path d="M3.500 0.500L0.800 3.500L3.500 6.500M7 0.500L4.300 3.500L7 6.500" stroke="#b0b0b0" fill="none" stroke-width="0.800"/></svg>
<div class="t" style="left:45px;top:251.8px;color:#333;font-size:7.600px">大纲</div>
<div class="a" style="left:68px;top:250.5px;width:35.5px;height:12.2px;background:#9b9b9b;border-radius:6.100px"></div>
<div class="t" style="left:74.5px;top:251.8px;color:#fff;font-size:7.600px">幻灯片</div>
<div class="a" style="left:21.500px;top:271px;width:108.500px;height:81.6px;background:#f3ecdf;border:1px solid #e0ddd6"></div>
<div class="a" style="left:22.5px;top:272px;width:510.5px;height:381.5px;transform:scale(0.2086);transform-origin:0 0;overflow:hidden;"><svg class="a" style="left:0;top:0" width="510.5" height="381.5" viewBox="0 0 510.5 381.5">
<rect width="510.5" height="381.5" fill="#fdf3e7"/>
<rect x="14" y="352" width="483" height="24" rx="10" fill="#d9906a" opacity=".38" style="filter:blur(4px)"/>
<rect x="6" y="20" width="20" height="340" rx="6" fill="#e8a888" opacity=".4" style="filter:blur(4px)"/>
<rect x="15" y="12.500" width="479.500" height="353.500" rx="7" fill="#f8b845"/>
<path d="M15 60V19.500A7 7 0 0 1 22 12.500H487.500A7 7 0 0 1 494.500 19.500V200H480V22H22V60Z" fill="#fbd462"/>
<path d="M15 60H22V250H15Z" fill="#f9c850"/>
<path d="M487 22H494.500V200H487Z" fill="#fbd462"/><path d="M487 200H494.500V300H487Z" fill="#f9c652"/>
<rect x="21" y="358.500" width="467" height="7" fill="#f6a83f"/>
<rect x="21" y="18.500" width="467" height="340" fill="#f8e9d8"/>
<rect x="21" y="18.500" width="4" height="340" fill="#fbf2e6"/>
<rect x="484" y="18.500" width="4" height="340" fill="#fbf1e3"/>
<rect x="21" y="357.500" width="467" height="1.300" fill="#b9713f"/>
<rect x="21" y="18.500" width="0.800" height="340" fill="#d9a070" opacity=".6"/>
<rect x="240" y="18.500" width="32" height="340" fill="#efd9c0" opacity=".35" style="filter:blur(3px)"/>
<rect x="255.300" y="18.500" width="1" height="340" fill="#e6cdb2" opacity=".7"/>
<g stroke="#efdfcb" stroke-width="0.800" opacity=".45"><path d="M45 283H231M45 309.500H231M45 328H231M280 283H470M280 309.500H470M280 328H470M45 260H231M280 260H470M45 50H231M280 50H470M45 76H231M280 76H470"/></g>
<path d="M7.500 178H25.500V201H7.500Z" fill="#f0855a"/><path d="M7.500 178H25.500V182H7.500Z" fill="#f6a07a" opacity=".6"/>
<path d="M5 202H23.500V224.500H5Z" fill="#2fa88c"/>
<path d="M485.300 36L498.400 28.400L504.900 46.200L485.300 60.300Z" fill="#36a9bd"/>
<path d="M484 303H503.500V326H484Z" fill="#9b52e0"/>
<path d="M484.500 326H505V349H484.500Z" fill="#7cba3c"/>
</svg><div class="a kai" style="left:95px;top:30px;font-size:20px;line-height:26px;white-space:nowrap;color:#d0201a;letter-spacing:1px">面对挫折，不同的态度 会产生不同的结果</div><div class="a" style="left:34px;top:64px;width:443px;height:285px;background:#fff;border:2px solid #222"></div><div class="a" style="left:290px;top:64px;width:2px;height:285px;background:#222"></div><div class="a" style="left:34px;top:113px;width:443px;height:1.500px;background:#333"></div><div class="a" style="left:34px;top:175px;width:443px;height:1.500px;background:#333"></div><div class="a" style="left:34px;top:258px;width:443px;height:1.500px;background:#333"></div><div class="a" style="left:125px;top:76px;font-size:24px;line-height:24px;font-weight:700;white-space:nowrap;color:#1f6fa8">消　极</div><div class="a" style="left:348px;top:76px;font-size:24px;line-height:24px;font-weight:700;white-space:nowrap;color:#1f6fa8">积　极</div><div class="a" style="left:112px;top:120px;font-size:21px;line-height:24px;font-weight:700;white-space:nowrap;color:#1f4f88">胆怯 懦弱</div><div class="a" style="left:116px;top:146px;font-size:21px;line-height:24px;font-weight:700;white-space:nowrap;color:#1f4f88">(惧怕型)</div><div class="a" style="left:40px;top:180px;font-size:21px;line-height:24px;font-weight:700;white-space:nowrap;color:#1f4f88">意志不坚走老路或强迫</div><div class="a" style="left:90px;top:208px;font-size:21px;line-height:24px;font-weight:700;white-space:nowrap;color:#1f4f88">(半途而废型)</div><div class="a" style="left:40px;top:264px;font-size:21px;line-height:24px;font-weight:700;white-space:nowrap;color:#1f4f88">意志坚强 勇敢走过去</div><div class="a" style="left:112px;top:292px;font-size:21px;line-height:24px;font-weight:700;white-space:nowrap;color:#1f4f88">(执着型)</div><div class="a kai" style="left:312px;top:124px;font-size:20px;line-height:22px;white-space:nowrap;color:#222">恐惧挫折，逃避</div><div class="a kai" style="left:312px;top:148px;font-size:20px;line-height:22px;white-space:nowrap;color:#222">自弃，一事无成</div><div class="a kai" style="left:306px;top:182px;font-size:20px;line-height:22px;white-space:nowrap;color:#222">稍见风霜失志，屈</div><div class="a kai" style="left:306px;top:206px;font-size:20px;line-height:22px;white-space:nowrap;color:#222">服于挫折挫折，不</div><div class="a kai" style="left:306px;top:230px;font-size:20px;line-height:22px;white-space:nowrap;color:#222">能战胜挫折</div><div class="a kai" style="left:312px;top:266px;font-size:20px;line-height:22px;white-space:nowrap;color:#222">有备挫折，磨砺</div><div class="a kai" style="left:312px;top:290px;font-size:20px;line-height:22px;white-space:nowrap;color:#222">成功，实现价值，</div><div class="a kai" style="left:312px;top:314px;font-size:20px;line-height:22px;white-space:nowrap;color:#222">事业人生</div></div>
<div class="t" style="left:11px;top:275px;font-size:7.8px;color:#333;font-family:Liberation Serif,serif;letter-spacing:.8px">13</div>
<svg class="a" style="left:9.500px;top:288px" width="7" height="7" viewBox="0 0 7 7"><path d="M3.500 0.500L4.300 2.800L6.500 2.800L4.700 4.200L5.400 6.500L3.500 5.100L1.600 6.500L2.300 4.200L0.500 2.800L2.700 2.800Z" fill="#888"/></svg>
<div class="a" style="left:21.500px;top:363px;width:108.500px;height:81.6px;background:#f3ecdf;border:1px solid #e0ddd6"></div>
<div class="a" style="left:22.5px;top:364px;width:510.5px;height:381.5px;transform:scale(0.2086);transform-origin:0 0;overflow:hidden;"><svg class="a" style="left:0;top:0" width="510.5" height="381.5" viewBox="0 0 510.5 381.5">
<rect width="510.5" height="381.5" fill="#fdf3e7"/>
<rect x="14" y="352" width="483" height="24" rx="10" fill="#d9906a" opacity=".38" style="filter:blur(4px)"/>
<rect x="6" y="20" width="20" height="340" rx="6" fill="#e8a888" opacity=".4" style="filter:blur(4px)"/>
<rect x="15" y="12.500" width="479.500" height="353.500" rx="7" fill="#f8b845"/>
<path d="M15 60V19.500A7 7 0 0 1 22 12.500H487.500A7 7 0 0 1 494.500 19.500V200H480V22H22V60Z" fill="#fbd462"/>
<path d="M15 60H22V250H15Z" fill="#f9c850"/>
<path d="M487 22H494.500V200H487Z" fill="#fbd462"/><path d="M487 200H494.500V300H487Z" fill="#f9c652"/>
<rect x="21" y="358.500" width="467" height="7" fill="#f6a83f"/>
<rect x="21" y="18.500" width="467" height="340" fill="#f8e9d8"/>
<rect x="21" y="18.500" width="4" height="340" fill="#fbf2e6"/>
<rect x="484" y="18.500" width="4" height="340" fill="#fbf1e3"/>
<rect x="21" y="357.500" width="467" height="1.300" fill="#b9713f"/>
<rect x="21" y="18.500" width="0.800" height="340" fill="#d9a070" opacity=".6"/>
<rect x="240" y="18.500" width="32" height="340" fill="#efd9c0" opacity=".35" style="filter:blur(3px)"/>
<rect x="255.300" y="18.500" width="1" height="340" fill="#e6cdb2" opacity=".7"/>
<g stroke="#efdfcb" stroke-width="0.800" opacity=".45"><path d="M45 283H231M45 309.500H231M45 328H231M280 283H470M280 309.500H470M280 328H470M45 260H231M280 260H470M45 50H231M280 50H470M45 76H231M280 76H470"/></g>
<path d="M7.500 178H25.500V201H7.500Z" fill="#f0855a"/><path d="M7.500 178H25.500V182H7.500Z" fill="#f6a07a" opacity=".6"/>
<path d="M5 202H23.500V224.500H5Z" fill="#2fa88c"/>
<path d="M485.300 36L498.400 28.400L504.900 46.200L485.300 60.300Z" fill="#36a9bd"/>
<path d="M484 303H503.500V326H484Z" fill="#9b52e0"/>
<path d="M484.500 326H505V349H484.500Z" fill="#7cba3c"/>
</svg><svg class="a" style="left:0;top:0" width="510.5" height="381.5" viewBox="0 0 510.5 381.5"><path d="M418.8 32.3 L420.5 36.1 L424.7 36.6 L421.6 39.4 L422.4 43.5 L418.8 41.5 L415.2 43.5 L416.0 39.4 L412.9 36.6 L417.1 36.1Z" fill="#f9c81e" stroke="#e8a013" stroke-width="0.900" stroke-linejoin="round" opacity=".55"/><path d="M416.9 37.9L418.8 34.8L419.7 37.9Z" fill="#fff3a8" opacity="0.8"/><circle cx="425.3" cy="31.7" r="1.600" fill="none" stroke="#e0603a" stroke-width="1" opacity=".55"/><circle cx="422.2" cy="31.1" r="1.100" fill="#f0a8c8" opacity=".55"/><circle cx="426.9" cy="36.0" r="1.100" fill="#f0a8c8" opacity=".55"/><circle cx="429.3" cy="28.6" r="1.200" fill="#f4d27a" opacity="0.9"/><path d="M459.0 42.0 L461.3 46.9 L466.6 47.5 L462.7 51.2 L463.7 56.5 L459.0 53.8 L454.3 56.5 L455.3 51.2 L451.4 47.5 L456.7 46.9Z" fill="#fbe27a" stroke="#e8a013" stroke-width="0.900" stroke-linejoin="round" opacity="0.85"/><path d="M456.6 49.2L459.0 45.2L460.2 49.2Z" fill="#fff3a8" opacity="0.68"/><circle cx="467.4" cy="41.2" r="1.600" fill="none" stroke="#e0603a" stroke-width="1" opacity="0.85"/><circle cx="463.4" cy="40.4" r="1.100" fill="#f0a8c8" opacity="0.85"/><circle cx="469.4" cy="46.8" r="1.100" fill="#f0a8c8" opacity="0.85"/><circle cx="472.6" cy="37.2" r="1.200" fill="#f4d27a" opacity="0.765"/><circle cx="461" cy="44" r="1.500" fill="#6aa8e0"/><circle cx="469" cy="43" r="2.200" fill="#f4b860"/><circle cx="471" cy="51" r="1.500" fill="none" stroke="#e890c0" stroke-width="0.800"/><path d="M392.5 76.8 L394.2 80.6 L398.4 81.1 L395.3 83.9 L396.1 88.0 L392.5 86.0 L388.9 88.0 L389.7 83.9 L386.6 81.1 L390.8 80.6Z" fill="#f9c81e" stroke="#e8a013" stroke-width="0.900" stroke-linejoin="round" opacity=".55"/><path d="M390.6 82.4L392.5 79.3L393.4 82.4Z" fill="#fff3a8" opacity="0.8"/><circle cx="399.0" cy="76.2" r="1.600" fill="none" stroke="#e0603a" stroke-width="1" opacity=".55"/><circle cx="395.9" cy="75.6" r="1.100" fill="#f0a8c8" opacity=".55"/><circle cx="400.6" cy="80.5" r="1.100" fill="#f0a8c8" opacity=".55"/><circle cx="403.0" cy="73.1" r="1.200" fill="#f4d27a" opacity="0.9"/><path d="M455.7 82.6 L457.4 86.4 L461.6 86.9 L458.5 89.7 L459.3 93.8 L455.7 91.8 L452.1 93.8 L452.9 89.7 L449.8 86.9 L454.0 86.4Z" fill="#f9c81e" stroke="#e8a013" stroke-width="0.900" stroke-linejoin="round" opacity=".55"/><path d="M453.8 88.2L455.7 85.1L456.6 88.2Z" fill="#fff3a8" opacity="0.8"/><circle cx="462.2" cy="82.0" r="1.600" fill="none" stroke="#e0603a" stroke-width="1" opacity=".55"/><circle cx="459.1" cy="81.4" r="1.100" fill="#f0a8c8" opacity=".55"/><circle cx="463.8" cy="86.3" r="1.100" fill="#f0a8c8" opacity=".55"/><circle cx="466.2" cy="78.9" r="1.200" fill="#f4d27a" opacity="0.9"/><path d="M468.4 114.6 L470.1 118.4 L474.3 118.9 L471.2 121.7 L472.0 125.8 L468.4 123.8 L464.8 125.8 L465.6 121.7 L462.5 118.9 L466.7 118.4Z" fill="#f9c81e" stroke="#e8a013" stroke-width="0.900" stroke-linejoin="round" opacity=".55"/><path d="M466.5 120.2L468.4 117.1L469.3 120.2Z" fill="#fff3a8" opacity="0.8"/><circle cx="474.9" cy="114.0" r="1.600" fill="none" stroke="#e0603a" stroke-width="1" opacity=".55"/><circle cx="471.8" cy="113.4" r="1.100" fill="#f0a8c8" opacity=".55"/><circle cx="476.5" cy="118.3" r="1.100" fill="#f0a8c8" opacity=".55"/><circle cx="478.9" cy="110.9" r="1.200" fill="#f4d27a" opacity="0.9"/></svg><div class="a kai" style="left:63px;top:107.0px;font-size:26px;line-height:40px;white-space:nowrap;color:#2a1c14;letter-spacing:1.100px">　　一面旗帜可能让人性命，却</div><div class="a kai" style="left:63px;top:155.7px;font-size:26px;line-height:40px;white-space:nowrap;color:#2a1c14;letter-spacing:1.100px">也可能成为成功的垫石！抱着希</div><div class="a kai" style="left:63px;top:204.4px;font-size:26px;line-height:40px;white-space:nowrap;color:#2a1c14;letter-spacing:1.100px">望的不同的反应完全取决于由谁</div><div class="a kai" style="left:63px;top:253.1px;font-size:26px;line-height:40px;white-space:nowrap;color:#2a1c14;letter-spacing:1.100px">挫折的不同态度。</div></div>
<div class="t" style="left:11px;top:367px;font-size:7.8px;color:#333;font-family:Liberation Serif,serif;letter-spacing:.8px">14</div>
<div class="a" style="left:21.500px;top:454.5px;width:108.500px;height:81.6px;background:#f3ecdf;border:1px solid #e0ddd6"></div>
<div class="a" style="left:22.5px;top:455.5px;width:510.5px;height:381.5px;transform:scale(0.2086);transform-origin:0 0;overflow:hidden;"><svg class="a" style="left:0;top:0" width="510.5" height="381.5" viewBox="0 0 510.5 381.5">
<rect width="510.5" height="381.5" fill="#fdf3e7"/>
<rect x="14" y="352" width="483" height="24" rx="10" fill="#d9906a" opacity=".38" style="filter:blur(4px)"/>
<rect x="6" y="20" width="20" height="340" rx="6" fill="#e8a888" opacity=".4" style="filter:blur(4px)"/>
<rect x="15" y="12.500" width="479.500" height="353.500" rx="7" fill="#f8b845"/>
<path d="M15 60V19.500A7 7 0 0 1 22 12.500H487.500A7 7 0 0 1 494.500 19.500V200H480V22H22V60Z" fill="#fbd462"/>
<path d="M15 60H22V250H15Z" fill="#f9c850"/>
<path d="M487 22H494.500V200H487Z" fill="#fbd462"/><path d="M487 200H494.500V300H487Z" fill="#f9c652"/>
<rect x="21" y="358.500" width="467" height="7" fill="#f6a83f"/>
<rect x="21" y="18.500" width="467" height="340" fill="#f8e9d8"/>
<rect x="21" y="18.500" width="4" height="340" fill="#fbf2e6"/>
<rect x="484" y="18.500" width="4" height="340" fill="#fbf1e3"/>
<rect x="21" y="357.500" width="467" height="1.300" fill="#b9713f"/>
<rect x="21" y="18.500" width="0.800" height="340" fill="#d9a070" opacity=".6"/>
<rect x="240" y="18.500" width="32" height="340" fill="#efd9c0" opacity=".35" style="filter:blur(3px)"/>
<rect x="255.300" y="18.500" width="1" height="340" fill="#e6cdb2" opacity=".7"/>
<g stroke="#efdfcb" stroke-width="0.800" opacity=".45"><path d="M45 283H231M45 309.500H231M45 328H231M280 283H470M280 309.500H470M280 328H470M45 260H231M280 260H470M45 50H231M280 50H470M45 76H231M280 76H470"/></g>
<path d="M7.500 178H25.500V201H7.500Z" fill="#f0855a"/><path d="M7.500 178H25.500V182H7.500Z" fill="#f6a07a" opacity=".6"/>
<path d="M5 202H23.500V224.500H5Z" fill="#2fa88c"/>
<path d="M485.300 36L498.400 28.400L504.900 46.200L485.300 60.300Z" fill="#36a9bd"/>
<path d="M484 303H503.500V326H484Z" fill="#9b52e0"/>
<path d="M484.500 326H505V349H484.500Z" fill="#7cba3c"/>
</svg><svg class="a" style="left:0;top:0" width="510.5" height="381.5" viewBox="0 0 510.5 381.5"><path d="M418.8 32.3 L420.5 36.1 L424.7 36.6 L421.6 39.4 L422.4 43.5 L418.8 41.5 L415.2 43.5 L416.0 39.4 L412.9 36.6 L417.1 36.1Z" fill="#f9c81e" stroke="#e8a013" stroke-width="0.900" stroke-linejoin="round" opacity=".5"/><path d="M416.9 37.9L418.8 34.8L419.7 37.9Z" fill="#fff3a8" opacity="0.8"/><circle cx="425.3" cy="31.7" r="1.600" fill="none" stroke="#e0603a" stroke-width="1" opacity=".5"/><circle cx="422.2" cy="31.1" r="1.100" fill="#f0a8c8" opacity=".5"/><circle cx="426.9" cy="36.0" r="1.100" fill="#f0a8c8" opacity=".5"/><circle cx="429.3" cy="28.6" r="1.200" fill="#f4d27a" opacity="0.9"/><path d="M459.0 42.0 L461.3 46.9 L466.6 47.5 L462.7 51.2 L463.7 56.5 L459.0 53.8 L454.3 56.5 L455.3 51.2 L451.4 47.5 L456.7 46.9Z" fill="#fbe27a" stroke="#e8a013" stroke-width="0.900" stroke-linejoin="round" opacity="0.85"/><path d="M456.6 49.2L459.0 45.2L460.2 49.2Z" fill="#fff3a8" opacity="0.68"/><circle cx="467.4" cy="41.2" r="1.600" fill="none" stroke="#e0603a" stroke-width="1" opacity="0.85"/><circle cx="463.4" cy="40.4" r="1.100" fill="#f0a8c8" opacity="0.85"/><circle cx="469.4" cy="46.8" r="1.100" fill="#f0a8c8" opacity="0.85"/><circle cx="472.6" cy="37.2" r="1.200" fill="#f4d27a" opacity="0.765"/><circle cx="461" cy="44" r="1.500" fill="#6aa8e0"/><circle cx="469" cy="43" r="2.200" fill="#f4b860"/><circle cx="471" cy="51" r="1.500" fill="none" stroke="#e890c0" stroke-width="0.800"/><path d="M392.5 76.8 L394.2 80.6 L398.4 81.1 L395.3 83.9 L396.1 88.0 L392.5 86.0 L388.9 88.0 L389.7 83.9 L386.6 81.1 L390.8 80.6Z" fill="#f9c81e" stroke="#e8a013" stroke-width="0.900" stroke-linejoin="round" opacity=".5"/><path d="M390.6 82.4L392.5 79.3L393.4 82.4Z" fill="#fff3a8" opacity="0.8"/><circle cx="399.0" cy="76.2" r="1.600" fill="none" stroke="#e0603a" stroke-width="1" opacity=".5"/><circle cx="395.9" cy="75.6" r="1.100" fill="#f0a8c8" opacity=".5"/><circle cx="400.6" cy="80.5" r="1.100" fill="#f0a8c8" opacity=".5"/><circle cx="403.0" cy="73.1" r="1.200" fill="#f4d27a" opacity="0.9"/><path d="M455.7 82.6 L457.4 86.4 L461.6 86.9 L458.5 89.7 L459.3 93.8 L455.7 91.8 L452.1 93.8 L452.9 89.7 L449.8 86.9 L454.0 86.4Z" fill="#f9c81e" stroke="#e8a013" stroke-width="0.900" stroke-linejoin="round" opacity=".5"/><path d="M453.8 88.2L455.7 85.1L456.6 88.2Z" fill="#fff3a8" opacity="0.8"/><circle cx="462.2" cy="82.0" r="1.600" fill="none" stroke="#e0603a" stroke-width="1" opacity=".5"/><circle cx="459.1" cy="81.4" r="1.100" fill="#f0a8c8" opacity=".5"/><circle cx="463.8" cy="86.3" r="1.100" fill="#f0a8c8" opacity=".5"/><circle cx="466.2" cy="78.9" r="1.200" fill="#f4d27a" opacity="0.9"/><path d="M468.4 114.6 L470.1 118.4 L474.3 118.9 L471.2 121.7 L472.0 125.8 L468.4 123.8 L464.8 125.8 L465.6 121.7 L462.5 118.9 L466.7 118.4Z" fill="#f9c81e" stroke="#e8a013" stroke-width="0.900" stroke-linejoin="round" opacity=".5"/><path d="M466.5 120.2L468.4 117.1L469.3 120.2Z" fill="#fff3a8" opacity="0.8"/><circle cx="474.9" cy="114.0" r="1.600" fill="none" stroke="#e0603a" stroke-width="1" opacity=".5"/><circle cx="471.8" cy="113.4" r="1.100" fill="#f0a8c8" opacity=".5"/><circle cx="476.5" cy="118.3" r="1.100" fill="#f0a8c8" opacity=".5"/><circle cx="478.9" cy="110.9" r="1.200" fill="#f4d27a" opacity="0.9"/></svg><div class="a kai" style="left:62px;top:56.0px;font-size:21.500px;line-height:32px;white-space:nowrap;color:#2a56c0">　人生的道路不可能一帆风顺，万事如意，</div><div class="a kai" style="left:62px;top:97.0px;font-size:21.500px;line-height:32px;white-space:nowrap;color:#2a56c0">在生活、学习、工作中都会遇到挫折，会</div><div class="a kai" style="left:62px;top:138.0px;font-size:21.500px;line-height:32px;white-space:nowrap;color:#2a56c0">遇到那么或者样挫折，挫折并不可怕。</div><div class="a" style="left:62px;top:196.0px;font-size:20px;line-height:32px;white-space:nowrap;color:#8a8078;font-family:'Liberation Serif','Noto Serif CJK SC',serif;letter-spacing:2px">　　一个人遭受挫折的打击是多方的，只</div><div class="a" style="left:62px;top:238.0px;font-size:20px;line-height:32px;white-space:nowrap;color:#8a8078;font-family:'Liberation Serif','Noto Serif CJK SC',serif;letter-spacing:2px">要勇对待内心，坚持不懈行动走，就能转</div><div class="a" style="left:62px;top:280.0px;font-size:20px;line-height:32px;white-space:nowrap;color:#8a8078;font-family:'Liberation Serif','Noto Serif CJK SC',serif;letter-spacing:2px">成胜挫折。</div></div>
<div class="t" style="left:11px;top:458.5px;font-size:7.8px;color:#333;font-family:Liberation Serif,serif;letter-spacing:.8px">15</div>
<svg class="a" style="left:9.500px;top:471.5px" width="7" height="7" viewBox="0 0 7 7"><path d="M3.500 0.500L4.300 2.800L6.500 2.800L4.700 4.200L5.400 6.500L3.500 5.100L1.600 6.500L2.300 4.200L0.500 2.800L2.700 2.800Z" fill="#888"/></svg>
<div class="a" style="left:20.500px;top:544.8px;width:110.500px;height:84.0px;border:1.500px solid #d9653a;border-radius:2px;background:#fdf3e7"></div>
<div class="a" style="left:22.5px;top:547px;width:510.5px;height:381.5px;transform:scale(0.2086);transform-origin:0 0;overflow:hidden;"><svg class="a" style="left:0;top:0" width="510.5" height="381.5" viewBox="0 0 510.5 381.5">
<rect width="510.5" height="381.5" fill="#fdf3e7"/>
<rect x="14" y="352" width="483" height="24" rx="10" fill="#d9906a" opacity=".38" style="filter:blur(4px)"/>
<rect x="6" y="20" width="20" height="340" rx="6" fill="#e8a888" opacity=".4" style="filter:blur(4px)"/>
<rect x="15" y="12.500" width="479.500" height="353.500" rx="7" fill="#f8b845"/>
<path d="M15 60V19.500A7 7 0 0 1 22 12.500H487.500A7 7 0 0 1 494.500 19.500V200H480V22H22V60Z" fill="#fbd462"/>
<path d="M15 60H22V250H15Z" fill="#f9c850"/>
<path d="M487 22H494.500V200H487Z" fill="#fbd462"/><path d="M487 200H494.500V300H487Z" fill="#f9c652"/>
<rect x="21" y="358.500" width="467" height="7" fill="#f6a83f"/>
<rect x="21" y="18.500" width="467" height="340" fill="#f8e9d8"/>
<rect x="21" y="18.500" width="4" height="340" fill="#fbf2e6"/>
<rect x="484" y="18.500" width="4" height="340" fill="#fbf1e3"/>
<rect x="21" y="357.500" width="467" height="1.300" fill="#b9713f"/>
<rect x="21" y="18.500" width="0.800" height="340" fill="#d9a070" opacity=".6"/>
<rect x="240" y="18.500" width="32" height="340" fill="#efd9c0" opacity=".35" style="filter:blur(3px)"/>
<rect x="255.300" y="18.500" width="1" height="340" fill="#e6cdb2" opacity=".7"/>
<g stroke="#efdfcb" stroke-width="0.800" opacity=".45"><path d="M45 283H231M45 309.500H231M45 328H231M280 283H470M280 309.500H470M280 328H470M45 260H231M280 260H470M45 50H231M280 50H470M45 76H231M280 76H470"/></g>
<path d="M7.500 178H25.500V201H7.500Z" fill="#f0855a"/><path d="M7.500 178H25.500V182H7.500Z" fill="#f6a07a" opacity=".6"/>
<path d="M5 202H23.500V224.500H5Z" fill="#2fa88c"/>
<path d="M485.300 36L498.400 28.400L504.900 46.200L485.300 60.300Z" fill="#36a9bd"/>
<path d="M484 303H503.500V326H484Z" fill="#9b52e0"/>
<path d="M484.500 326H505V349H484.500Z" fill="#7cba3c"/>
</svg><svg class="a" style="left:0;top:0" width="510.5" height="381.5" viewBox="0 0 510.5 381.5"><path d="M418.8 32.3 L420.5 36.1 L424.7 36.6 L421.6 39.4 L422.4 43.5 L418.8 41.5 L415.2 43.5 L416.0 39.4 L412.9 36.6 L417.1 36.1Z" fill="#f9c81e" stroke="#e8a013" stroke-width="0.900" stroke-linejoin="round" opacity="1"/><path d="M416.9 37.9L418.8 34.8L419.7 37.9Z" fill="#fff3a8" opacity="0.8"/><circle cx="425.3" cy="31.7" r="1.600" fill="none" stroke="#e0603a" stroke-width="1" opacity="1"/><circle cx="422.2" cy="31.1" r="1.100" fill="#f0a8c8" opacity="1"/><circle cx="426.9" cy="36.0" r="1.100" fill="#f0a8c8" opacity="1"/><circle cx="429.3" cy="28.6" r="1.200" fill="#f4d27a" opacity="0.9"/><path d="M459.0 42.0 L461.3 46.9 L466.6 47.5 L462.7 51.2 L463.7 56.5 L459.0 53.8 L454.3 56.5 L455.3 51.2 L451.4 47.5 L456.7 46.9Z" fill="#fbe27a" stroke="#e8a013" stroke-width="0.900" stroke-linejoin="round" opacity="0.85"/><path d="M456.6 49.2L459.0 45.2L460.2 49.2Z" fill="#fff3a8" opacity="0.68"/><circle cx="467.4" cy="41.2" r="1.600" fill="none" stroke="#e0603a" stroke-width="1" opacity="0.85"/><circle cx="463.4" cy="40.4" r="1.100" fill="#f0a8c8" opacity="0.85"/><circle cx="469.4" cy="46.8" r="1.100" fill="#f0a8c8" opacity="0.85"/><circle cx="472.6" cy="37.2" r="1.200" fill="#f4d27a" opacity="0.765"/><circle cx="461" cy="44" r="1.500" fill="#6aa8e0"/><circle cx="469" cy="43" r="2.200" fill="#f4b860"/><circle cx="471" cy="51" r="1.500" fill="none" stroke="#e890c0" stroke-width="0.800"/><path d="M392.5 76.8 L394.2 80.6 L398.4 81.1 L395.3 83.9 L396.1 88.0 L392.5 86.0 L388.9 88.0 L389.7 83.9 L386.6 81.1 L390.8 80.6Z" fill="#f9c81e" stroke="#e8a013" stroke-width="0.900" stroke-linejoin="round" opacity="1"/><path d="M390.6 82.4L392.5 79.3L393.4 82.4Z" fill="#fff3a8" opacity="0.8"/><circle cx="399.0" cy="76.2" r="1.600" fill="none" stroke="#e0603a" stroke-width="1" opacity="1"/><circle cx="395.9" cy="75.6" r="1.100" fill="#f0a8c8" opacity="1"/><circle cx="400.6" cy="80.5" r="1.100" fill="#f0a8c8" opacity="1"/><circle cx="403.0" cy="73.1" r="1.200" fill="#f4d27a" opacity="0.9"/><path d="M455.7 82.6 L457.4 86.4 L461.6 86.9 L458.5 89.7 L459.3 93.8 L455.7 91.8 L452.1 93.8 L452.9 89.7 L449.8 86.9 L454.0 86.4Z" fill="#f9c81e" stroke="#e8a013" stroke-width="0.900" stroke-linejoin="round" opacity="1"/><path d="M453.8 88.2L455.7 85.1L456.6 88.2Z" fill="#fff3a8" opacity="0.8"/><circle cx="462.2" cy="82.0" r="1.600" fill="none" stroke="#e0603a" stroke-width="1" opacity="1"/><circle cx="459.1" cy="81.4" r="1.100" fill="#f0a8c8" opacity="1"/><circle cx="463.8" cy="86.3" r="1.100" fill="#f0a8c8" opacity="1"/><circle cx="466.2" cy="78.9" r="1.200" fill="#f4d27a" opacity="0.9"/><path d="M468.4 114.6 L470.1 118.4 L474.3 118.9 L471.2 121.7 L472.0 125.8 L468.4 123.8 L464.8 125.8 L465.6 121.7 L462.5 118.9 L466.7 118.4Z" fill="#f9c81e" stroke="#e8a013" stroke-width="0.900" stroke-linejoin="round" opacity="1"/><path d="M466.5 120.2L468.4 117.1L469.3 120.2Z" fill="#fff3a8" opacity="0.8"/><circle cx="474.9" cy="114.0" r="1.600" fill="none" stroke="#e0603a" stroke-width="1" opacity="1"/><circle cx="471.8" cy="113.4" r="1.100" fill="#f0a8c8" opacity="1"/><circle cx="476.5" cy="118.3" r="1.100" fill="#f0a8c8" opacity="1"/><circle cx="478.9" cy="110.9" r="1.200" fill="#f4d27a" opacity="0.9"/></svg><div class="a" style="left:43px;top:36px;width:190px;height:64px;transform:rotate(-13deg) skewX(-6deg) scaleY(.95);transform-origin:0 100%;font-family:'Liberation Sans','Noto Sans CJK SC',sans-serif;font-weight:900;font-size:58px;line-height:64px;letter-spacing:10px;white-space:nowrap"><div style="position:absolute;left:0;top:0;white-space:nowrap;color:#f88c14;text-shadow:-0.9px 0.8px 0 #e66e0e,-1.8px 1.6px 0 #df680c,-2.7px 2.4px 0 #d8620b,-3.6px 3.2px 0 #d15c0a,-4.5px 4.0px 0 #ca5609,-5.4px 4.8px 0 #c35008,-6.3px 5.6px 0 #bc4a07,-7.2px 6.4px 0 #b54406,-8.1px 7.2px 0 #ad3e05,-9.0px 8.0px 0 #a53804">总结<span style="font-size:46px;letter-spacing:0;position:relative;display:inline-block;line-height:30px;width:14px;top:-9px;left:6px;transform:scale(1.3,.8)">:</span></div><div style="position:absolute;left:0;top:0;white-space:nowrap;background:linear-gradient(180deg,#ffd02a 8%,#fca31a 45%,#f27d0f 92%);-webkit-background-clip:text;background-clip:text;-webkit-text-fill-color:transparent;color:transparent">总结<span style="font-size:46px;letter-spacing:0;position:relative;display:inline-block;line-height:30px;width:14px;top:-9px;left:6px;transform:scale(1.3,.8)">:</span></div></div><div class="a kai" style="left:52px;top:123.4px;font-size:21px;letter-spacing:1.500px;line-height:27.200px;height:27.200px;white-space:nowrap;color:#1a1410">&#8201;通过学习我们知道了人们无</div><div class="a kai" style="left:50.5px;top:150.6px;font-size:21px;letter-spacing:1.500px;line-height:27.200px;height:27.200px;white-space:nowrap;color:#1a1410">法避免挫折，人们对待挫折的态</div><div class="a kai" style="left:50.5px;top:177.8px;font-size:21px;letter-spacing:1.500px;line-height:27.200px;height:27.200px;white-space:nowrap;color:#1a1410">度是不同的，而只有积极、勇敢</div><div class="a kai" style="left:50.5px;top:205.0px;font-size:21px;letter-spacing:1.500px;line-height:27.200px;height:27.200px;white-space:nowrap;color:#1a1410">地面对挫折、战胜挫折，才能成功。让我</div><div class="a kai" style="left:50.5px;top:232.2px;font-size:21px;letter-spacing:1.500px;line-height:27.200px;height:27.200px;white-space:nowrap;color:#1a1410">们选择坚强吧，相信阳光总在风雨后。</div></div>
<div class="t" style="left:11px;top:550px;font-size:7.8px;color:#333;font-family:Liberation Serif,serif;letter-spacing:.8px">16</div>
<svg class="a" style="left:9.500px;top:563px" width="7" height="7" viewBox="0 0 7 7"><path d="M3.500 0.500L4.300 2.800L6.500 2.800L4.700 4.200L5.400 6.500L3.500 5.100L1.600 6.500L2.300 4.200L0.500 2.800L2.700 2.800Z" fill="#888"/></svg>
<div class="a" style="left:21.500px;top:637.500px;width:108.500px;height:8.500px;background:#f3ecdf;border:1px solid #e0ddd6;border-bottom:0;overflow:hidden"><div class="a" style="left:4px;top:3.500px;width:99px;height:8px;background:#fbd462;border-radius:2px 2px 0 0"></div></div>
<div class="a" style="left:134.2px;top:535px;width:4.4px;height:88px;background:#bdbdbd;border-radius:2.200px"></div>
<svg class="a" style="left:67px;top:650px;" width="9" height="9" viewBox="0 0 9 9"><path d="M4.500 0V9M0 4.500H9" stroke="#555" stroke-width="0.900"/></svg>
<svg class="a" style="left:146px;top:650.5px;" width="9" height="8" viewBox="0 0 9 8"><rect x="0.500" y="0.500" width="8" height="7" stroke="#666" fill="none" stroke-width="0.900"/><path d="M2.500 3H6.500M2.500 5H6.500" stroke="#666" stroke-width="0.800"/></svg>
<div class="t" style="left:160px;top:649.8px;color:#555;font-size:7.600px">单击此处添加备注</div>
<div class="t" style="left:8px;top:670px;color:#555;font-size:7.400px">幻灯片 16 / 17</div>
<div class="t" style="left:72px;top:670px;color:#777;font-size:7.500px;letter-spacing:.46px">cea97f15-6b26-4967-895f-3d470bb1f4c3</div>
<svg class="a" style="left:239.5px;top:671.5px;" width="8" height="7" viewBox="0 0 8 7"><text x="0" y="6" font-size="7" fill="#666" font-family="Liberation Serif,serif">T</text><circle cx="5.800" cy="5" r="1.800" stroke="#666" fill="none" stroke-width="0.600"/></svg>
<div class="t" style="left:249px;top:670px;color:#555;font-size:7.400px">缺失字体</div>
<svg class="a" style="left:696px;top:671.5px;" width="10" height="7" viewBox="0 0 10 7"><path d="M0 0.500H9M0 3H9M0 5.500H6" stroke="#555" stroke-width="0.900"/></svg>
<svg class="a" style="left:706.5px;top:676.2px;" width="3.2" height="2.2" viewBox="0 0 3.2 2.2"><path d="M0 0H3.200L1.600 2Z" fill="#555"/></svg>
<div class="a" style="left:714px;top:668px;width:14.5px;height:14px;background:#cfcfcf;border-radius:1.500px"></div>
<svg class="a" style="left:716.5px;top:670.5px;" width="10" height="9" viewBox="0 0 10 9"><rect x="0.500" y="0.500" width="9" height="8" rx="0.800" stroke="#444" fill="none" stroke-width="0.900"/><path d="M3 0.500V8.500" stroke="#444" stroke-width="0.800"/></svg>
<svg class="a" style="left:732.5px;top:670.5px;" width="11" height="9" viewBox="0 0 11 9"><rect x="0.500" y="0.500" width="3.800" height="3.200" rx="0.800" class="ic" stroke-width="0.900"/><rect x="6.200" y="0.500" width="3.800" height="3.200" rx="0.800" class="ic" stroke-width="0.900"/><rect x="0.500" y="5.300" width="3.800" height="3.200" rx="0.800" class="ic" stroke-width="0.900"/><rect x="6.200" y="5.300" width="3.800" height="3.200" rx="0.800" class="ic" stroke-width="0.900"/></svg>
<svg class="a" style="left:749px;top:670.5px;" width="10" height="9" viewBox="0 0 10 9"><path d="M0.500 1H4.500V8.500H0.500ZM4.500 1H9V8.500H4.500" class="ic" stroke-width="0.900"/></svg>
<div class="a" style="left:769.5px;top:667.2px;width:19.5px;height:15px;background:#f0724b;border-radius:2px"></div>
<svg class="a" style="left:776px;top:670.5px;" width="7" height="8.5" viewBox="0 0 7 8.5"><path d="M0.500 0.500L6.500 4.200L0.500 8Z" fill="#fff"/></svg>
<svg class="a" style="left:792px;top:675.2px;" width="3.2" height="2.2" viewBox="0 0 3.2 2.2"><path d="M0 0H3.200L1.600 2Z" fill="#777"/></svg>
<div class="t" style="left:805px;top:670px;color:#555;font-size:7.400px">83%</div>
<svg class="a" style="left:824px;top:675.2px;" width="3.2" height="2.2" viewBox="0 0 3.2 2.2"><path d="M0 0H3.200L1.600 2Z" fill="#888"/></svg>
<div class="a" style="left:834px;top:674.3px;width:8px;height:1.3px;background:#444"></div>
<div class="a" style="left:848px;top:674.5px;width:87px;height:1px;background:#d4d4d4"></div>
<div class="a" style="left:892.5px;top:672.5px;width:1px;height:5px;background:#c8c8c8"></div>
<div class="a" style="left:879.5px;top:671.2px;width:7.6px;height:7.6px;background:#f6f6f6;border:1px solid #444;border-radius:50%"></div>
<svg class="a" style="left:942px;top:671px;" width="9" height="9" viewBox="0 0 9 9"><path d="M4.500 0.500V8.500M0.500 4.500H8.500" stroke="#444" stroke-width="1.200"/></svg>
<svg class="a" style="left:958px;top:671px;" width="9" height="9" viewBox="0 0 9 9"><path d="M0.500 2.800V0.500H2.800M6.200 0.500H8.500V2.800M8.500 6.200V8.500H6.200M2.800 8.500H0.500V6.200" stroke="#555" fill="none" stroke-width="0.900"/><path d="M3 4.500H6" stroke="#888" stroke-width="0.800"/></svg>
<svg class="a" style="left:776.5px;top:249.5px;" width="5" height="3.5" viewBox="0 0 5 3.5"><path d="M0 3.200H5L2.500 0Z" fill="#777"/></svg>
<div class="a" style="left:775.3px;top:557px;width:6.5px;height:24px;background:#fbfbfb;border:1px solid #cfcfcf;border-radius:3px"></div>
<svg class="a" style="left:777.3px;top:607px;" width="3.4" height="2.4" viewBox="0 0 3.4 2.4"><path d="M0 0H3.400L1.700 2.400Z" fill="#8a8a8a"/></svg>
<svg class="a" style="left:777.3px;top:616.5px;" width="3.4" height="5.4" viewBox="0 0 3.4 5.4"><path d="M0 2.200H3.400L1.700 0ZM0 3.200H3.400L1.700 5.400Z" fill="#9a9a9a"/></svg>
<svg class="a" style="left:777.3px;top:627.5px;" width="3.4" height="5.4" viewBox="0 0 3.4 5.4"><path d="M0 0H3.400L1.700 2.400ZM0 2.800H3.400L1.700 5.200Z" fill="#9a9a9a"/></svg>
<div class="t" style="left:788px;top:247px;color:#333;font-size:7.600px">对象属性</div>
<svg class="a" style="left:820px;top:252.2px;" width="3.2" height="2.2" viewBox="0 0 3.2 2.2"><path d="M0 0H3.200L1.600 2Z" fill="#555"/></svg>
<svg class="a" style="left:922px;top:247.5px;" width="9" height="9" viewBox="0 0 9 9"><rect x="0.500" y="3.800" width="8" height="4.700" rx="0.800" stroke="#9a9a9a" fill="none" stroke-width="0.900"/><path d="M2 3.800V2.500C2 0 6.500 0 6.500 2.500" stroke="#9a9a9a" fill="none" stroke-width="0.900"/></svg>
<svg class="a" style="left:937px;top:248.5px;" width="7" height="7" viewBox="0 0 7 7"><path d="M0.500 0.500L6.500 6.500M6.500 0.500L0.500 6.500" stroke="#8a8a8a" stroke-width="0.900"/></svg>
<svg class="a" style="left:792.5px;top:261.5px;" width="15" height="14" viewBox="0 0 15 14"><path d="M2 6.500L7 1.500L12 6.500L7 11.500Z" stroke="#333" fill="none" stroke-width="1" transform="rotate(8 7 6.500)"/><path d="M4.500 2C5 0.500 8 0 8.500 2" stroke="#333" fill="none" stroke-width="0.800"/><path d="M13 6.500V10.500" stroke="#6aa0d8" stroke-width="1.300"/></svg>
<div class="t" style="left:792px;top:279.3px;color:#d8703a;font-size:7.800px;font-weight:700">填充</div>
<div class="a" style="left:789px;top:292.5px;width:20.5px;height:1.3px;background:#d8703a"></div>
<svg class="a" style="left:789.5px;top:309.5px;" width="4" height="4" viewBox="0 0 4 4"><path d="M4 0V4H0Z" fill="#d8703a"/></svg>
<div class="t" style="left:796px;top:306.3px;color:#d8703a;font-size:7.800px;font-weight:700">填充</div>
<div class="a" style="left:869.5px;top:303.5px;width:69px;height:15.8px;background:#fdfdfd;border:1px solid #e2e2e2;border-radius:2px"></div>
<div class="a" style="left:872.5px;top:306.3px;width:56px;height:10.2px;background:#fbe4d2"></div>
<div class="a" style="left:872.5px;top:309px;width:1px;height:5px;background:#d8a070"></div>
<div class="a" style="left:927.5px;top:306.5px;width:1px;height:10px;background:#444"></div>
<div class="a" style="left:926.5px;top:306.5px;width:3px;height:1px;background:#444"></div>
<div class="a" style="left:926.5px;top:315.5px;width:3px;height:1px;background:#444"></div>
<div class="a" style="left:932.5px;top:311px;width:3px;height:1px;background:#555"></div>
<div class="a" style="left:796px;top:327.0px;width:9px;height:9px;border:1px solid #a0a0a0;border-radius:50%;background:#f3f3f3"></div>
<div class="t" style="left:807px;top:326.7px;color:#444;font-size:7.500px">纯色填充(S)</div>
<div class="a" style="left:796px;top:341.7px;width:9px;height:9px;border:1px solid #a0a0a0;border-radius:50%;background:#f3f3f3"></div>
<div class="t" style="left:807px;top:341.4px;color:#444;font-size:7.500px">渐变填充(G)</div>
<div class="a" style="left:796px;top:356.3px;width:9px;height:9px;border:1px solid #a0a0a0;border-radius:50%;background:#f3f3f3"></div>
<div class="a" style="left:798.3px;top:358.6px;width:4.4px;height:4.4px;background:#b9785a;border-radius:50%"></div>
<div class="t" style="left:807px;top:356.0px;color:#444;font-size:7.500px">图片或纹理填充(P)</div>
<div class="a" style="left:796px;top:371.0px;width:9px;height:9px;border:1px solid #a0a0a0;border-radius:50%;background:#f3f3f3"></div>
<div class="t" style="left:807px;top:370.7px;color:#444;font-size:7.500px">图案填充(A)</div>
<div class="a" style="left:796px;top:386.5px;width:9px;height:8.5px;border:1px solid #a4a4a4;background:#f3f3f3"></div>
<div class="t" style="left:807px;top:385.8px;color:#444;font-size:7.500px">隐藏背景图形(H)</div>
<div class="t" style="left:795.5px;top:414.2px;color:#444;font-size:7.600px">图片填充</div>
<div class="a" style="left:889px;top:413.8px;width:50px;height:11px;background:#fdfdfd;border:1px solid #e0e0e0;border-radius:2px"></div>
<div class="t" style="left:892px;top:414.2px;color:#333;font-size:7.300px">请选择图片</div>
<svg class="a" style="left:931.5px;top:419.0px;" width="3.2" height="2.2" viewBox="0 0 3.2 2.2"><path d="M0 0H3.200L1.600 2Z" fill="#555"/></svg>
<div class="t" style="left:795.5px;top:433.8px;color:#555;font-size:7.500px">纹理填充(U)</div>
<div class="a" style="left:902px;top:431.8px;width:37px;height:14.5px;background:#fdfdfd;border:1px solid #e4e4e4;border-radius:2px"></div>
<svg class="a" style="left:911.5px;top:435.5px;" width="7" height="7" viewBox="0 0 7 7"><rect x="0.500" y="0.500" width="6" height="6" fill="#dfe9f8" stroke="#7ea6dc" stroke-width="0.700" stroke-dasharray="1.200 1"/></svg>
<svg class="a" style="left:931.5px;top:438.5px;" width="3.2" height="2.2" viewBox="0 0 3.2 2.2"><path d="M0 0H3.200L1.600 2Z" fill="#555"/></svg>
<div class="t" style="left:795.5px;top:455.2px;color:#555;font-size:7.500px">透明度(T)</div>
<div class="a" style="left:869.5px;top:455.7px;width:9px;height:9px;border:1px solid #a8a8a8;border-radius:50%;background:#fafafa"></div>
<div class="a" style="left:872px;top:459.8px;width:4px;height:0.9px;background:#777"></div>
<div class="t" style="left:880px;top:449.5px;color:#555;font-size:6.800px">0%</div>
<div class="a" style="left:881px;top:459.7px;width:46px;height:1px;background:#c9c9c9"></div>
<svg class="a" style="left:880px;top:460.5px;" width="5" height="4" viewBox="0 0 5 4"><path d="M2.500 0L5 4H0Z" fill="#e08850"/></svg>
<div class="a" style="left:929.3px;top:455.7px;width:9px;height:9px;border:1px solid #a8a8a8;border-radius:50%;background:#fafafa"></div>
<svg class="a" style="left:931.8px;top:458.2px;" width="4" height="4" viewBox="0 0 4 4"><path d="M2 0V4M0 2H4" stroke="#666" stroke-width="0.800"/></svg>
<div class="t" style="left:795.5px;top:476px;color:#444;font-size:7.500px">放置方式(I)</div>
<div class="a" style="left:890px;top:474.5px;width:49px;height:11.7px;background:#fdfdfd;border:1px solid #e2e2e2;border-radius:2px"></div>
<div class="t" style="left:892.5px;top:475.8px;color:#333;font-size:7.600px">拉伸</div>
<div class="a" style="left:931.5px;top:480.5px;width:2.5px;height:0.9px;background:#666"></div>
<div class="t" style="left:800.8px;top:497px;color:#4a4a4a;font-size:7.500px">向左偏移(L)</div>
<div class="a" style="left:868.8px;top:496px;width:70px;height:12px;background:#fdfdfd;border:1px solid #dadada;border-radius:2px"></div>
<div class="a" style="left:883.3px;top:496px;width:1px;height:12px;background:#dadada"></div>
<div class="a" style="left:873.8px;top:501.6px;width:4px;height:0.9px;background:#555"></div>
<div class="t" style="left:886px;top:497px;color:#555;font-size:7.200px">0%</div>
<svg class="a" style="left:928.8px;top:499.7px;" width="4.6" height="4.6" viewBox="0 0 4.6 4.6"><path d="M2.300 0V4.600M0 2.300H4.600" stroke="#555" stroke-width="0.800"/></svg>
<div class="t" style="left:800.8px;top:513.5px;color:#4a4a4a;font-size:7.500px">向右偏移(R)</div>
<div class="a" style="left:868.8px;top:512.5px;width:70px;height:12px;background:#fdfdfd;border:1px solid #dadada;border-radius:2px"></div>
<div class="a" style="left:883.3px;top:512.5px;width:1px;height:12px;background:#dadada"></div>
<div class="a" style="left:873.8px;top:518.1px;width:4px;height:0.9px;background:#555"></div>
<div class="t" style="left:886px;top:513.5px;color:#555;font-size:7.200px">0%</div>
<svg class="a" style="left:928.8px;top:516.2px;" width="4.6" height="4.6" viewBox="0 0 4.6 4.6"><path d="M2.300 0V4.600M0 2.300H4.600" stroke="#555" stroke-width="0.800"/></svg>
<div class="t" style="left:800.8px;top:530px;color:#4a4a4a;font-size:7.500px">向上偏移(O)</div>
<div class="a" style="left:868.8px;top:529px;width:70px;height:12px;background:#fdfdfd;border:1px solid #dadada;border-radius:2px"></div>
<div class="a" style="left:883.3px;top:529px;width:1px;height:12px;background:#dadada"></div>
<div class="a" style="left:873.8px;top:534.6px;width:4px;height:0.9px;background:#555"></div>
<div class="t" style="left:886px;top:530px;color:#555;font-size:7.200px">0%</div>
<svg class="a" style="left:928.8px;top:532.7px;" width="4.6" height="4.6" viewBox="0 0 4.6 4.6"><path d="M2.300 0V4.600M0 2.300H4.600" stroke="#555" stroke-width="0.800"/></svg>
<div class="t" style="left:800.8px;top:547px;color:#4a4a4a;font-size:7.500px">向下偏移(M)</div>
<div class="a" style="left:868.8px;top:546px;width:70px;height:12px;background:#fdfdfd;border:1px solid #dadada;border-radius:2px"></div>
<div class="a" style="left:883.3px;top:546px;width:1px;height:12px;background:#dadada"></div>
<div class="a" style="left:873.8px;top:551.6px;width:4px;height:0.9px;background:#555"></div>
<div class="t" style="left:886px;top:547px;color:#555;font-size:7.200px">0%</div>
<svg class="a" style="left:928.8px;top:549.7px;" width="4.6" height="4.6" viewBox="0 0 4.6 4.6"><path d="M2.300 0V4.600M0 2.300H4.600" stroke="#555" stroke-width="0.800"/></svg>
<div class="a" style="left:796px;top:569.5px;width:9px;height:8.5px;border:1px solid #c4c4c4;background:#f1f1f1"></div>
<div class="t" style="left:807px;top:569px;color:#b0b0b0;font-size:7.400px">与形状一起旋转(W)</div>
<svg class="a" style="left:918.5px;top:546.5px;" width="7" height="11" viewBox="0 0 7 11"><path d="M0.700 0.700V8.800L2.800 6.900L4.300 10.200L5.600 9.600L4.100 6.400H6.600Z" fill="#fff" stroke="#222" stroke-width="0.800" stroke-linejoin="round"/></svg>
<div class="a" style="left:789.5px;top:642.8px;width:36px;height:15px;background:#fdfdfd;border:1px solid #cfcfcf"></div>
<div class="t" style="left:793px;top:645.5px;color:#333;font-size:7.400px">全部应用</div>
<div class="a" style="left:829px;top:642.8px;width:36.5px;height:15px;background:#efefef;border:1px solid #d2d2d2"></div>
<div class="t" style="left:832.5px;top:645.5px;color:#b5b5b5;font-size:7.400px">重置背景</div>
<svg class="a" style="left:870px;top:646.5px;" width="8.5" height="8.5" viewBox="0 0 8.5 8.5"><circle cx="4.250" cy="4.250" r="3.700" stroke="#e0704f" fill="none" stroke-width="0.900"/><path d="M3.300 2.500L5.800 4.250L3.300 6Z" stroke="#e0704f" fill="none" stroke-width="0.700"/></svg>
<div class="t" style="left:883px;top:645.8px;color:#4a8fd6;font-size:7.500px">操作技巧</div>
<div class="a" style="left:956.5px;top:248.8px;width:10.5px;height:0.9px;background:#bdbdbd"></div>
<div class="a" style="left:956.5px;top:251.8px;width:10.5px;height:0.9px;background:#bdbdbd"></div>
<div class="a" style="left:952px;top:260.4px;width:20px;height:19.6px;background:#bcbcbc;border-radius:1.500px"></div>
<svg class="a" style="left:957px;top:264.5px;" width="10" height="11" viewBox="0 0 10 11"><path d="M0 2H10M0 5.500H10M0 9H10" stroke="#444" stroke-width="0.900"/><rect x="6.500" y="0.500" width="1.800" height="3" fill="#bcbcbc" stroke="#444" stroke-width="0.700"/><rect x="2" y="4" width="1.800" height="3" fill="#bcbcbc" stroke="#444" stroke-width="0.700"/><rect x="6" y="7.500" width="1.800" height="3" fill="#bcbcbc" stroke="#444" stroke-width="0.700"/></svg>
<svg class="a" style="left:957px;top:645.5px;" width="11" height="13" viewBox="0 0 11 13"><rect x="0.600" y="0.600" width="3.800" height="4.800" rx="1.200" class="ic" stroke-width="1"/><rect x="6.400" y="0.600" width="3.800" height="4.800" rx="1.200" class="ic" stroke-width="1"/><rect x="0.600" y="7.400" width="3.800" height="4.800" rx="1.200" class="ic" stroke-width="1"/><rect x="6.400" y="7.400" width="3.800" height="4.800" rx="1.200" class="ic" stroke-width="1"/></svg>
<div class="a" style="left:202.300px;top:253.300px;width:511.500px;height:382.600px;background:#d4d4d4"></div>
<div class="a" style="left:203px;top:254px;width:510.5px;height:381.5px;transform:scale(1);transform-origin:0 0;overflow:hidden;"><svg class="a" style="left:0;top:0" width="510.5" height="381.5" viewBox="0 0 510.5 381.5">
<rect width="510.5" height="381.5" fill="#fdf3e7"/>
<rect x="14" y="352" width="483" height="24" rx="10" fill="#d9906a" opacity=".38" style="filter:blur(4px)"/>
<rect x="6" y="20" width="20" height="340" rx="6" fill="#e8a888" opacity=".4" style="filter:blur(4px)"/>
<rect x="15" y="12.500" width="479.500" height="353.500" rx="7" fill="#f8b845"/>
<path d="M15 60V19.500A7 7 0 0 1 22 12.500H487.500A7 7 0 0 1 494.500 19.500V200H480V22H22V60Z" fill="#fbd462"/>
<path d="M15 60H22V250H15Z" fill="#f9c850"/>
<path d="M487 22H494.500V200H487Z" fill="#fbd462"/><path d="M487 200H494.500V300H487Z" fill="#f9c652"/>
<rect x="21" y="358.500" width="467" height="7" fill="#f6a83f"/>
<rect x="21" y="18.500" width="467" height="340" fill="#f8e9d8"/>
<rect x="21" y="18.500" width="4" height="340" fill="#fbf2e6"/>
<rect x="484" y="18.500" width="4" height="340" fill="#fbf1e3"/>
<rect x="21" y="357.500" width="467" height="1.300" fill="#b9713f"/>
<rect x="21" y="18.500" width="0.800" height="340" fill="#d9a070" opacity=".6"/>
<rect x="240" y="18.500" width="32" height="340" fill="#efd9c0" opacity=".35" style="filter:blur(3px)"/>
<rect x="255.300" y="18.500" width="1" height="340" fill="#e6cdb2" opacity=".7"/>
<g stroke="#efdfcb" stroke-width="0.800" opacity=".45"><path d="M45 283H231M45 309.500H231M45 328H231M280 283H470M280 309.500H470M280 328H470M45 260H231M280 260H470M45 50H231M280 50H470M45 76H231M280 76H470"/></g>
<path d="M7.500 178H25.500V201H7.500Z" fill="#f0855a"/><path d="M7.500 178H25.500V182H7.500Z" fill="#f6a07a" opacity=".6"/>
<path d="M5 202H23.500V224.500H5Z" fill="#2fa88c"/>
<path d="M485.300 36L498.400 28.400L504.900 46.200L485.300 60.300Z" fill="#36a9bd"/>
<path d="M484 303H503.500V326H484Z" fill="#9b52e0"/>
<path d="M484.500 326H505V349H484.500Z" fill="#7cba3c"/>
</svg><svg class="a" style="left:0;top:0" width="510.5" height="381.5" viewBox="0 0 510.5 381.5"><path d="M418.8 32.3 L420.5 36.1 L424.7 36.6 L421.6 39.4 L422.4 43.5 L418.8 41.5 L415.2 43.5 L416.0 39.4 L412.9 36.6 L417.1 36.1Z" fill="#f9c81e" stroke="#e8a013" stroke-width="0.900" stroke-linejoin="round" opacity="1"/><path d="M416.9 37.9L418.8 34.8L419.7 37.9Z" fill="#fff3a8" opacity="0.8"/><circle cx="425.3" cy="31.7" r="1.600" fill="none" stroke="#e0603a" stroke-width="1" opacity="1"/><circle cx="422.2" cy="31.1" r="1.100" fill="#f0a8c8" opacity="1"/><circle cx="426.9" cy="36.0" r="1.100" fill="#f0a8c8" opacity="1"/><circle cx="429.3" cy="28.6" r="1.200" fill="#f4d27a" opacity="0.9"/><path d="M459.0 42.0 L461.3 46.9 L466.6 47.5 L462.7 51.2 L463.7 56.5 L459.0 53.8 L454.3 56.5 L455.3 51.2 L451.4 47.5 L456.7 46.9Z" fill="#fbe27a" stroke="#e8a013" stroke-width="0.900" stroke-linejoin="round" opacity="0.85"/><path d="M456.6 49.2L459.0 45.2L460.2 49.2Z" fill="#fff3a8" opacity="0.68"/><circle cx="467.4" cy="41.2" r="1.600" fill="none" stroke="#e0603a" stroke-width="1" opacity="0.85"/><circle cx="463.4" cy="40.4" r="1.100" fill="#f0a8c8" opacity="0.85"/><circle cx="469.4" cy="46.8" r="1.100" fill="#f0a8c8" opacity="0.85"/><circle cx="472.6" cy="37.2" r="1.200" fill="#f4d27a" opacity="0.765"/><circle cx="461" cy="44" r="1.500" fill="#6aa8e0"/><circle cx="469" cy="43" r="2.200" fill="#f4b860"/><circle cx="471" cy="51" r="1.500" fill="none" stroke="#e890c0" stroke-width="0.800"/><path d="M392.5 76.8 L394.2 80.6 L398.4 81.1 L395.3 83.9 L396.1 88.0 L392.5 86.0 L388.9 88.0 L389.7 83.9 L386.6 81.1 L390.8 80.6Z" fill="#f9c81e" stroke="#e8a013" stroke-width="0.900" stroke-linejoin="round" opacity="1"/><path d="M390.6 82.4L392.5 79.3L393.4 82.4Z" fill="#fff3a8" opacity="0.8"/><circle cx="399.0" cy="76.2" r="1.600" fill="none" stroke="#e0603a" stroke-width="1" opacity="1"/><circle cx="395.9" cy="75.6" r="1.100" fill="#f0a8c8" opacity="1"/><circle cx="400.6" cy="80.5" r="1.100" fill="#f0a8c8" opacity="1"/><circle cx="403.0" cy="73.1" r="1.200" fill="#f4d27a" opacity="0.9"/><path d="M455.7 82.6 L457.4 86.4 L461.6 86.9 L458.5 89.7 L459.3 93.8 L455.7 91.8 L452.1 93.8 L452.9 89.7 L449.8 86.9 L454.0 86.4Z" fill="#f9c81e" stroke="#e8a013" stroke-width="0.900" stroke-linejoin="round" opacity="1"/><path d="M453.8 88.2L455.7 85.1L456.6 88.2Z" fill="#fff3a8" opacity="0.8"/><circle cx="462.2" cy="82.0" r="1.600" fill="none" stroke="#e0603a" stroke-width="1" opacity="1"/><circle cx="459.1" cy="81.4" r="1.100" fill="#f0a8c8" opacity="1"/><circle cx="463.8" cy="86.3" r="1.100" fill="#f0a8c8" opacity="1"/><circle cx="466.2" cy="78.9" r="1.200" fill="#f4d27a" opacity="0.9"/><path d="M468.4 114.6 L470.1 118.4 L474.3 118.9 L471.2 121.7 L472.0 125.8 L468.4 123.8 L464.8 125.8 L465.6 121.7 L462.5 118.9 L466.7 118.4Z" fill="#f9c81e" stroke="#e8a013" stroke-width="0.900" stroke-linejoin="round" opacity="1"/><path d="M466.5 120.2L468.4 117.1L469.3 120.2Z" fill="#fff3a8" opacity="0.8"/><circle cx="474.9" cy="114.0" r="1.600" fill="none" stroke="#e0603a" stroke-width="1" opacity="1"/><circle cx="471.8" cy="113.4" r="1.100" fill="#f0a8c8" opacity="1"/><circle cx="476.5" cy="118.3" r="1.100" fill="#f0a8c8" opacity="1"/><circle cx="478.9" cy="110.9" r="1.200" fill="#f4d27a" opacity="0.9"/></svg><div class="a" style="left:43px;top:36px;width:190px;height:64px;transform:rotate(-13deg) skewX(-6deg) scaleY(.95);transform-origin:0 100%;font-family:'Liberation Sans','Noto Sans CJK SC',sans-serif;font-weight:900;font-size:58px;line-height:64px;letter-spacing:10px;white-space:nowrap"><div style="position:absolute;left:0;top:0;white-space:nowrap;color:#f88c14;text-shadow:-0.9px 0.8px 0 #e66e0e,-1.8px 1.6px 0 #df680c,-2.7px 2.4px 0 #d8620b,-3.6px 3.2px 0 #d15c0a,-4.5px 4.0px 0 #ca5609,-5.4px 4.8px 0 #c35008,-6.3px 5.6px 0 #bc4a07,-7.2px 6.4px 0 #b54406,-8.1px 7.2px 0 #ad3e05,-9.0px 8.0px 0 #a53804">总结<span style="font-size:46px;letter-spacing:0;position:relative;display:inline-block;line-height:30px;width:14px;top:-9px;left:6px;transform:scale(1.3,.8)">:</span></div><div style="position:absolute;left:0;top:0;white-space:nowrap;background:linear-gradient(180deg,#ffd02a 8%,#fca31a 45%,#f27d0f 92%);-webkit-background-clip:text;background-clip:text;-webkit-text-fill-color:transparent;color:transparent">总结<span style="font-size:46px;letter-spacing:0;position:relative;display:inline-block;line-height:30px;width:14px;top:-9px;left:6px;transform:scale(1.3,.8)">:</span></div></div><div class="a kai" style="left:52px;top:123.4px;font-size:21px;letter-spacing:1.500px;line-height:27.200px;height:27.200px;white-space:nowrap;color:#1a1410">&#8201;通过学习我们知道了人们无</div><div class="a kai" style="left:50.5px;top:150.6px;font-size:21px;letter-spacing:1.500px;line-height:27.200px;height:27.200px;white-space:nowrap;color:#1a1410">法避免挫折，人们对待挫折的态</div><div class="a kai" style="left:50.5px;top:177.8px;font-size:21px;letter-spacing:1.500px;line-height:27.200px;height:27.200px;white-space:nowrap;color:#1a1410">度是不同的，而只有积极、勇敢</div><div class="a kai" style="left:50.5px;top:205.0px;font-size:21px;letter-spacing:1.500px;line-height:27.200px;height:27.200px;white-space:nowrap;color:#1a1410">地面对挫折、战胜挫折，才能成功。让我</div><div class="a kai" style="left:50.5px;top:232.2px;font-size:21px;letter-spacing:1.500px;line-height:27.200px;height:27.200px;white-space:nowrap;color:#1a1410">们选择坚强吧，相信阳光总在风雨后。</div></div>
<div class="a" style="left:956px;top:398.5px;width:20px;height:50.5px;background:#565759;border-radius:5px 0 0 5px"></div>
<svg class="a" style="left:962.5px;top:413.5px;" width="9" height="19" viewBox="0 0 9 19"><path d="M1 1L8 9.500L1 18" stroke="#c9c9c9" fill="none" stroke-width="1.600"/></svg>
</div></div>
</div>
<!-- ======= SIDEBAR ======= -->
<div id="side">
  <svg class="abs" style="left:98px;top:12px" width="24" height="16" viewBox="0 0 24 16"><path d="M0.500 15.300L12 0.500L23.500 15.300Z" fill="#bdbdbd"/></svg>
  <!-- tile 1 -->
  <div class="tile" style="top:35px;height:113px;border:1px solid #25a068;border-top-color:#15603f;border-left:1px solid #1a7a50;border-radius:4px;background:linear-gradient(170deg,#121314 0%,#17181a 50%,#222325 100%)">
    <div class="av" id="av1" style="left:66.500px;top:14.500px"><svg width="64" height="64" viewBox="0 0 64 64"><rect width="64" height="64" fill="#0c0c0d"/>
<ellipse cx="52" cy="34" rx="14" ry="24" fill="#170c0d"/>
<rect x="6.500" y="12" width="11.500" height="15.500" rx="1" fill="#d9c9cb"/><path d="M7 12L12.500 4L17.500 12Z" fill="#cbb7b9"/><rect x="7" y="18.500" width="10.500" height="3.500" fill="#8e8588"/><rect x="12" y="27" width="1.600" height="22" fill="#a9a4a0"/>
<path d="M25 22C26 13 32 11 38 11.500C45 12 48 18 47.500 25L45 22C40 19 32 19 28 23Z" fill="#24160f"/>
<ellipse cx="37.500" cy="31" rx="10.500" ry="14" fill="#8e6b55"/>
<path d="M28 24C30 19 44 18 47 24C45 21 31 21 28 24Z" fill="#2a1a12"/>
<ellipse cx="36" cy="39.500" rx="6" ry="4" fill="#a98168"/>
<path d="M30 28H35M40 28H45" stroke="#4a3428" stroke-width="1.500"/>
<path d="M29 50C34 46 38 46 42 44L52 40C55 44 54 54 50 58L30 60Z" fill="#7a2930"/>
<path d="M36 44L44 42L46 50L38 54Z" fill="#8a6650"/>
<path d="M2 31C2 44 8 52 16 56L20 52C13 48 8 40 8 34Z" fill="#e2bd94"/>
<path d="M18 50C22 56 30 62 40 62L38 57C30 57 25 53 22 48Z" fill="#e6c49e"/>
<path d="M8 34C10 33 13 34 14 37L12 44Z" fill="#d9b088"/>
</svg></div>
    <div class="abs" style="left:2px;bottom:2.500px;width:25px;height:24.500px;background:#ee7b1c"><svg class="abs" style="left:3px;top:3px" width="19" height="20" viewBox="0 0 19 20"><circle cx="9.500" cy="5.500" r="4.200" fill="#f3ede6"/><path d="M1 19.500C1 13 4.500 10.500 9.500 10.500S18 13 18 19.500Z" fill="#f3ede6"/></svg></div>
    <div class="nm" style="left:27px;bottom:2.500px;height:24.500px;width:144px;padding-left:51px;background:#0d0e0f"><svg style="left:2px;top:3px" width="19" height="19" viewBox="0 0 19 19"><rect x="0.500" y="0.500" width="18" height="12.500" rx="1.500" fill="#e6e6ea"/><rect x="5" y="15.500" width="9" height="2.200" rx="0.800" fill="#e6e6ea"/><path d="M5 10.500C5.400 7.500 7.300 6 10 5.900V3.600L13.800 7L10 10.300V8.200C8 8.100 6.400 8.800 5 10.500Z" fill="#222"/></svg><span class="abs" style="left:27px;top:0"><svg style="left:0;top:3px" width="18" height="19" viewBox="0 0 18 19"><rect x="5" y="0.500" width="8" height="12" rx="4" fill="#fff"/><path d="M5 7.500H13V8.500A4 4 0 0 1 5 8.500Z" fill="#57d773"/><path d="M1.800 8C1.800 12.200 4.800 14.800 9 14.800S16.200 12.200 16.200 8" stroke="#fff" stroke-width="1.800" fill="none" stroke-linecap="round"/><path d="M9 15V18" stroke="#fff" stroke-width="1.800"/></svg></span>刘威的屏幕共...</div>
  </div>
  <!-- tile 2 -->
  <div class="tile" style="top:159px;border:2px solid #4e4f52;background:#f3f5f5" id="vid"><svg class="abs" style="left:0;top:0;filter:blur(.7px)" width="195" height="107" viewBox="0 0 195 107">
<rect width="195" height="107" fill="#f1f3f4"/>
<path d="M10 0H146V44L30 50Z" fill="#dfe3e6"/>
<g stroke="#c2c7cb" stroke-width="0.700" fill="none"><path d="M14 5H146M17 10H146M20 15.500H146M23 21H146M25 27H146M27 33H146M29 39.500H146M30 46H146"/><path d="M26 0L40 48M40 0L51 48M55 0L63 47M70 0L75 47M86 0L87 46M102 0L99 46M118 0L111 45M134 0L124 45"/></g>
<path d="M146 0H195V107H162L152 46Z" fill="#fcfcfc"/><path d="M145 0L150 46L160 107H153L142 46L140 0Z" fill="#d8dfe4"/>
<rect x="28" y="48" width="120" height="59" fill="#eceff1"/>
<path d="M30 50L44 50L40 107H30Z" fill="#f6f7f7"/>
<path d="M0 4L12 0L28 22L24 86L0 86Z" fill="#fbfbf9"/>
<path d="M0 0H12L0 5Z" fill="#cfd4d8"/>
<g><path d="M9 24L12 22L15 25L13 29L9 28Z" fill="#f0b52e"/><circle cx="8" cy="36" r="2.300" fill="#3f94dc"/><circle cx="15" cy="41" r="1.800" fill="#e4dc52"/><circle cx="9" cy="47" r="2" fill="#ecd24a"/><circle cx="17" cy="52" r="1.800" fill="#82d090"/><circle cx="8" cy="57" r="1.800" fill="#f290a6"/><circle cx="15" cy="63" r="2" fill="#5fb0e8"/><circle cx="7" cy="70" r="2" fill="#f2a04a"/><circle cx="13" cy="76" r="1.800" fill="#b9e070"/><circle cx="21" cy="44" r="1.500" fill="#f3c0d0"/><circle cx="21" cy="60" r="1.500" fill="#c9e8a0"/></g>
<path d="M16 66H31V86H14Z" fill="#c79fb0"/><rect x="31" y="76" width="9" height="5" fill="#7cc44a"/>
<path d="M96 12H100V22H96Z" fill="#e9d668"/><path d="M72 13L106 11" stroke="#b9b39a" stroke-width="0.800"/>
<ellipse cx="114" cy="52" rx="3.500" ry="1.700" fill="#2aa0d6"/><ellipse cx="118" cy="57" rx="2" ry="1.500" fill="#f0c24a"/>
<circle cx="105" cy="75" r="7.500" fill="#2a9bd2"/><path d="M100.500 73H109.500M100.500 76H109.500M101 79H108" stroke="#d5ecf8" stroke-width="1"/>
<path d="M94 88H102L100 95H96Z" fill="#7d8e98"/><rect x="100" y="90" width="18" height="2" fill="#46bd5e"/>
<path d="M114 86C115 77 121 74 125 80C130 82 128 91 124 91L122 101H119L118 91C113 91 112 89 114 86Z" fill="#3c8c38"/>
<rect x="121" y="92" width="19" height="15" fill="#d8b48f"/>
<rect x="142" y="77" width="12" height="14" fill="#e2e8e6" stroke="#a3afab" stroke-width="0.800"/><rect x="144" y="79" width="8" height="4" fill="#88b09a"/>
<path d="M181 50C183 46 187 47 189 51C190 55 188 61 185 63C182 60 180 55 181 50Z" fill="#b5d682"/>
<path d="M47 107C46 92 46 72 50 56C54 44 64 38 78 38C94 38 103 50 103 64C106 64 109 70 107 76C105 82 101 84 99 84C97 92 93 100 88 107Z" fill="#ebbfa6"/>
<path d="M50 68C49 60 48 50 50 44C54 30 62 23 76 22C94 21 106 36 105 58C104 62 103 64 103 66C102 58 100 50 96 45C88 38 68 38 58 44C54 48 51 58 50 68Z" fill="#28211d"/>
<ellipse cx="106" cy="70" rx="3.800" ry="6.500" fill="#e3b096"/>
<ellipse cx="55" cy="60.500" rx="4" ry="1.600" fill="#35251f"/><ellipse cx="78.500" cy="60.500" rx="4.600" ry="1.700" fill="#35251f"/>
<path d="M50 56C53 54 58 54 61 55M72 55C76 53 82 53 86 55" stroke="#6d5346" stroke-width="1" fill="none"/>
<path d="M61 70C60 74 62 76.500 66 76.500C69.500 76.500 71 74 70 70" fill="#dba58c"/>
<path d="M58 84C64 81 72 81 78 85C72 88 64 88 58 84Z" fill="#8c3a36"/>
<path d="M76 84L98 81" stroke="#f5f5f5" stroke-width="1"/>
<path d="M62 107C72 98 98 98 122 107Z" fill="#d6d6d4"/>
</svg>
    <div class="nm" style="left:0;bottom:0;width:74px;background:rgba(38,33,30,.86)"><svg style="left:7px;top:3px" width="18" height="19" viewBox="0 0 18 19"><rect x="5" y="0.500" width="8" height="12" rx="4" fill="#fff"/><path d="M5 7.500H13V8.500A4 4 0 0 1 5 8.500Z" fill="#57d773"/><path d="M1.800 8C1.800 12.200 4.800 14.800 9 14.800S16.200 12.200 16.200 8" stroke="#fff" stroke-width="1.800" fill="none" stroke-linecap="round"/><path d="M9 15V18" stroke="#fff" stroke-width="1.800"/></svg>郑林晨</div>
  </div>
  <!-- tile 3 -->
  <div class="tile" style="top:281px;height:112px;background:#232426">
    <div class="av" id="av3" style="background:#fbfbfb;top:14.500px;left:65.600px"><svg width="64" height="64" viewBox="0 0 64 64"><rect width="64" height="64" fill="#fbfbfb"/>
<path d="M13.500 56C16 50 17 47 15 44C11 40 9.500 34 11 27C13 16 22 9 34 8.500C44 8 52 12 57 21" stroke="#1a1a1a" stroke-width="2.300" fill="none" stroke-linecap="round"/>
<path d="M58 38C56 46 50 49 46 52C44 54 44 58 44.500 62" stroke="#1a1a1a" stroke-width="2.300" fill="none" stroke-linecap="round"/>
<path d="M14 55L17 58L20 55" stroke="#1a1a1a" stroke-width="1.800" fill="none"/>
<ellipse cx="33.500" cy="34" rx="8.500" ry="4.800" fill="#111" transform="rotate(-8 33.500 34)"/><ellipse cx="30.500" cy="34.600" rx="3.600" ry="2.100" fill="#fbfbfb" transform="rotate(-8 30.500 34.600)"/>
<ellipse cx="54.500" cy="29.500" rx="7.500" ry="8.200" fill="#111"/><ellipse cx="51.500" cy="29.500" rx="4.200" ry="5.500" fill="#fbfbfb"/>
<ellipse cx="44.500" cy="38.500" rx="1.500" ry="0.900" fill="#777"/>
<path d="M28 40.500C31 41.500 35 41.500 38 40.500" stroke="#bbb" stroke-width="1" fill="none"/>
</svg></div>
    <div class="nm" style="width:100px"><svg width="18" height="19" viewBox="0 0 18 19"><rect x="5" y="0.500" width="8" height="12" rx="4" fill="#fff"/><path d="M1.800 8C1.800 12.200 4.800 14.800 9 14.800S16.200 12.200 16.200 8" stroke="#fff" stroke-width="1.800" fill="none" stroke-linecap="round"/><path d="M9 15V18" stroke="#fff" stroke-width="1.800"/><path d="M1.500 16.500L16.500 2.500" stroke="#121314" stroke-width="3.600"/><path d="M1.500 16.500L16.500 2.500" stroke="#e8564c" stroke-width="1.700"/></svg>应心孙仪文</div>
  </div>
  <!-- tile 4 -->
  <div class="tile" style="top:404px;height:112px;background:#242527">
    <div class="av" id="av4" style="left:66.700px;top:13.200px;width:62px;height:62px"><svg width="62" height="62" viewBox="0 0 62 62"><rect width="62" height="62" fill="#3a2c1e"/>
<rect x="12" y="0" width="40" height="18" fill="#1c1b18"/><rect x="14" y="3" width="26" height="3" fill="#8d8a7c"/><rect x="30" y="0" width="18" height="4" fill="#6b5a2c"/>
<path d="M0 36L24 24L34 20L52 30L58 40L50 46L20 44L12 62L0 62Z" fill="#ef7a1b"/>
<path d="M0 38C3 36 8 38 14 42L16 60L4 56Z" fill="#e8741a"/>
<ellipse cx="48" cy="19" rx="10" ry="12" fill="#c9906a"/><path d="M42 8C48 4 56 7 59 14C60 18 58 22 57 24C56 18 52 12 42 8Z" fill="#6a4a30"/>
<path d="M2 20C6 12 10 10 14 12L22 30L10 36L0 30Z" fill="#d9a473"/>
<path d="M8 14C12 11 18 12 21 18L24 34L14 34L8 26Z" fill="#e7dcb5"/><path d="M11 18L19 17M12 22L20 21M13 26L21 25M14 30L22 29" stroke="#a89862" stroke-width="1.600"/>
<path d="M4 30C14 34 28 40 40 40C46 40 50 40 52 42L48 47C38 47 22 46 6 40Z" fill="#d7a273"/>
<path d="M16 46C30 50 48 48 58 34L62 36L62 52L46 60L18 60Z" fill="#a58c6c"/>
<path d="M18 58H48L46 62H20Z" fill="#4a3a28"/>
</svg></div>
    <div class="nm" style="width:61px;font-size:14px"><svg width="18" height="19" viewBox="0 0 18 19"><rect x="5" y="0.500" width="8" height="12" rx="4" fill="#fff"/><path d="M1.800 8C1.800 12.200 4.800 14.800 9 14.800S16.200 12.200 16.200 8" stroke="#fff" stroke-width="1.800" fill="none" stroke-linecap="round"/><path d="M9 15V18" stroke="#fff" stroke-width="1.800"/><path d="M1.500 16.500L16.500 2.500" stroke="#121314" stroke-width="3.600"/><path d="M1.500 16.500L16.500 2.500" stroke="#e8564c" stroke-width="1.700"/></svg>sam</div>
  </div>
  <!-- tile 5 -->
  <div class="tile" style="top:527px;height:112px;background:linear-gradient(180deg,#1b1c1e,#121314);border-color:#3d3e41">
    <div class="av" id="av5" style="background:#e9e9e9;top:14.500px;left:65.600px"><svg width="64" height="64" viewBox="0 0 64 64"><rect width="64" height="64" fill="#e6e6e6"/>
<path d="M0 30L8 10L14 14L4 34Z" fill="#e3a58f"/>
<path d="M2 34C6 30 8 22 10 12C14 10 20 8 26 9L28 4L33 3L32 10C38 12 41 20 40 28C42 32 40 38 36 40C32 46 24 48 20 44C14 40 8 40 2 34Z" fill="#8a9199"/>
<path d="M27 5L32 4L31 10L27 10Z" fill="#e9b1a3"/>
<ellipse cx="28" cy="25" rx="3.200" ry="5" fill="#d5d76a"/><ellipse cx="36" cy="25" rx="2.600" ry="4.400" fill="#d5d76a"/><ellipse cx="29" cy="26.500" rx="1.200" ry="2" fill="#222"/><ellipse cx="36.500" cy="26.500" rx="1" ry="1.800" fill="#222"/>
<path d="M14 36C18 32 24 32 30 34C36 36 40 34 40 38C36 46 26 48 20 44Z" fill="#dfe2e4"/>
<path d="M22 38C26 38 30 40 32 38C32 44 26 47 23 44Z" fill="#a72a30"/>
<ellipse cx="33" cy="34.500" rx="2" ry="1.300" fill="#222"/>
<path d="M46 36C48 30 54 28 58 32L63 31L62 40C60 46 54 50 50 50L44 46C46 44 44 40 46 36Z" fill="#b9834a"/>
<ellipse cx="60" cy="33" rx="3.400" ry="4" fill="#d9a377"/><ellipse cx="53" cy="41" rx="3.500" ry="5" fill="#d8b07c"/>
<path d="M4 48C8 44 16 44 20 48C22 52 20 58 16 58C12 58 8 56 6 52Z" fill="#c42228"/><path d="M20 50L26 46L30 54L34 47L36 58L20 58Z" fill="#c42228"/>
<path d="M25 52H30" stroke="#c42228" stroke-width="2"/>
<path d="M33 49L42 47L44 56C40 62 34 62 31 58Z" fill="#c42228"/><path d="M42 48L58 44L56 56L44 60Z" fill="#c42228"/>
</svg></div>
    <div class="nm" style="width:60px;color:#8a8a8a;background:#0e0f10"><svg width="18" height="19" viewBox="0 0 18 19"><rect x="5" y="0.500" width="8" height="12" rx="4" fill="#8a8a8a"/><path d="M1.800 8C1.800 12.200 4.800 14.800 9 14.800S16.200 12.200 16.200 8" stroke="#8a8a8a" stroke-width="1.800" fill="none" stroke-linecap="round"/><path d="M9 15V18" stroke="#8a8a8a" stroke-width="1.800"/></svg>锅锅</div>
  </div>
  <svg class="abs" style="left:98px;top:626px" width="26" height="16" viewBox="0 0 26 16"><path d="M1 1H25L13 15.500Z" fill="#fff"/></svg>
</div>
<!-- ======= BOTTOM BAR ======= -->
<div id="bottombar">
  <!-- mic muted -->
  <svg class="abs" style="left:178px;top:6px" width="28" height="34" viewBox="0 0 28 34">
    <rect x="9.3" y="2" width="9.4" height="17.5" rx="4.7" fill="#45464a"/>
    <path d="M5.3 14.5C5.3 20 9 23.3 14 23.3S22.7 20 22.7 14.5" stroke="#45464a" stroke-width="2.2" fill="none" stroke-linecap="round"/>
    <path d="M14 23.5V30M7.5 30.4H20.5" stroke="#45464a" stroke-width="2.2" stroke-linecap="round"/>
    <path d="M3.5 27L24.5 6.5" stroke="#fafafa" stroke-width="5"/>
    <path d="M3.5 27L24.5 6.5" stroke="#e8493f" stroke-width="2.2"/>
  </svg>
  <svg class="abs" style="left:243px;top:20px" width="12" height="8" viewBox="0 0 12 8"><path d="M0.3 7.5L6 0.5L11.7 7.5Z" fill="#55565a"/></svg>
  <!-- camera off -->
  <svg class="abs" style="left:274px;top:10px" width="34" height="26" viewBox="0 0 34 26">
    <rect x="1.8" y="2.8" width="20.5" height="20" rx="2.5" fill="#45464a"/>
    <path d="M23.5 11L31 5.2C31.7 4.7 32.4 5 32.4 5.9V19.7C32.4 20.6 31.7 20.9 31 20.4L23.5 14.8Z" fill="#45464a"/>
    <path d="M2.5 24L24.5 1.5" stroke="#fafafa" stroke-width="5"/>
    <path d="M2.5 24L24.5 1.5" stroke="#e8493f" stroke-width="2.2"/>
  </svg>
  <svg class="abs" style="left:328px;top:20px" width="12" height="8" viewBox="0 0 12 8"><path d="M0.3 7.5L6 0.5L11.7 7.5Z" fill="#55565a"/></svg>
  <!-- share screen -->
  <svg class="abs" style="left:366px;top:11px" width="34" height="28" viewBox="0 0 34 28">
    <rect x="2" y="2.3" width="30" height="18.8" rx="2.4" fill="#45464a"/>
    <rect x="10" y="24" width="14" height="2.6" rx="1" fill="#45464a"/>
    <path d="M11.5 16.2C12 11.8 14.5 9.6 18 9.4V6.3L23.3 11L18 15.6V12.7C15.3 12.6 13.3 13.6 11.5 16.2Z" fill="#fff"/>
  </svg>
  <!-- invite -->
  <svg class="abs" style="left:453px;top:9px" width="32" height="28" viewBox="0 0 32 28">
    <circle cx="13.5" cy="7.2" r="5.7" fill="#45464a"/>
    <path d="M2 26.5C2 18.5 6.5 14 13.5 14S25 18.5 25 26.5Z" fill="#45464a"/>
    <circle cx="23.3" cy="19.8" r="7.2" fill="#fafafa"/>
    <circle cx="23.3" cy="19.8" r="5.7" fill="#45464a"/>
    <path d="M23.3 16.6V23M20.1 19.8H26.5" stroke="#fff" stroke-width="1.7"/>
  </svg>
  <!-- members -->
  <svg class="abs" style="left:530px;top:9px" width="32" height="28" viewBox="0 0 32 28">
    <circle cx="16.6" cy="7.2" r="5.6" fill="#45464a"/>
    <path d="M6 26.5C6 18.5 10 14 17.5 14S29.6 18.5 29.6 26.5Z" fill="#45464a"/>
    <circle cx="14.2" cy="7.2" r="6.4" fill="#fafafa"/>
    <path d="M1 27.5C1 18 6 13 14.2 13S27.6 18 27.6 27.5Z" fill="#fafafa"/>
    <circle cx="14.2" cy="7.2" r="5.6" fill="#45464a"/>
    <path d="M2 26.5C2 18.5 6.5 14 14.2 14S26.4 18.5 26.4 26.5Z" fill="#45464a"/>
  </svg>
  <!-- chat -->
  <svg class="abs" style="left:606px;top:11px" width="30" height="28" viewBox="0 0 30 28">
    <path d="M5.4 2.3H24.6A3 3 0 0 1 27.6 5.300V18.3A3 3 0 0 1 24.6 21.3H23.4V25.6L17.6 21.3H5.4A3 3 0 0 1 2.4 18.3V5.300A3 3 0 0 1 5.400 2.300Z" fill="#45464a"/>
    <circle cx="9.300" cy="11.7" r="1.8" fill="#fff"/><circle cx="15" cy="11.7" r="1.8" fill="#fff"/><circle cx="20.7" cy="11.7" r="1.8" fill="#fff"/>
  </svg>
  <!-- record -->
  <svg class="abs" style="left:690px;top:7px" width="32" height="32" viewBox="0 0 32 32">
    <circle cx="16" cy="16" r="12.8" fill="none" stroke="#45464a" stroke-width="2"/>
    <circle cx="16" cy="16" r="9.800" fill="#45464a"/>
  </svg>
  <svg class="abs" style="left:722px;top:0px" width="27" height="27" viewBox="0 0 27 27">
    <path d="M1 0H26V26Z" fill="#f5882a"/>
    <text x="0" y="0" transform="translate(8.800,3.200) rotate(45)" font-family="Liberation Sans,sans-serif" font-size="7.600" font-weight="700" fill="#ffe3c4" textLength="17.500" lengthAdjust="spacingAndGlyphs">NEW</text>
  </svg>
  <!-- emoji -->
  <svg class="abs" style="left:775px;top:7px" width="32" height="32" viewBox="0 0 32 32">
    <circle cx="16" cy="16" r="13.6" fill="#45464a"/>
    <circle cx="10.600" cy="10.8" r="2.1" fill="#fafafa"/><circle cx="21.4" cy="10.8" r="2.1" fill="#fafafa"/>
    <path d="M6.8 16.2H25.2C25.2 21.600 21.2 25.2 16 25.2S6.8 21.600 6.8 16.2Z" fill="#fafafa"/>
  </svg>
  <!-- more -->
  <svg class="abs" style="left:860px;top:18px" width="32" height="10" viewBox="0 0 32 10">
    <circle cx="5" cy="4.800" r="3.1" fill="#45464a"/><circle cx="16" cy="4.800" r="3.1" fill="#45464a"/><circle cx="27" cy="4.800" r="3.1" fill="#45464a"/>
  </svg>

  <div class="bl" style="left:140px;width:104px">解除静音</div>
  <div class="bl" style="left:239px;width:104px">开启视频</div>
  <div class="bl" style="left:331px;width:104px">共享屏幕</div>
  <div class="bl" style="left:416px;width:104px">邀请</div>
  <div class="bl" style="left:493px;width:104px">成员(8)</div>
  <div class="bl" style="left:569px;width:104px">聊天</div>
  <div class="bl" style="left:654px;width:104px">录制</div>
  <div class="bl" style="left:739px;width:104px">表情</div>
  <div class="bl" style="left:824px;width:104px">更多</div>
  <div class="abs" style="left:1061px;top:10px;width:95px;height:45px;border:1px solid #e26a66;border-radius:4px;color:#e0524d;font-size:17.5px;line-height:45px;text-align:center;background:#fdfbfb">离开会议</div>
</div>
<div id="strip"><i></i></div>
</body>
</html>
